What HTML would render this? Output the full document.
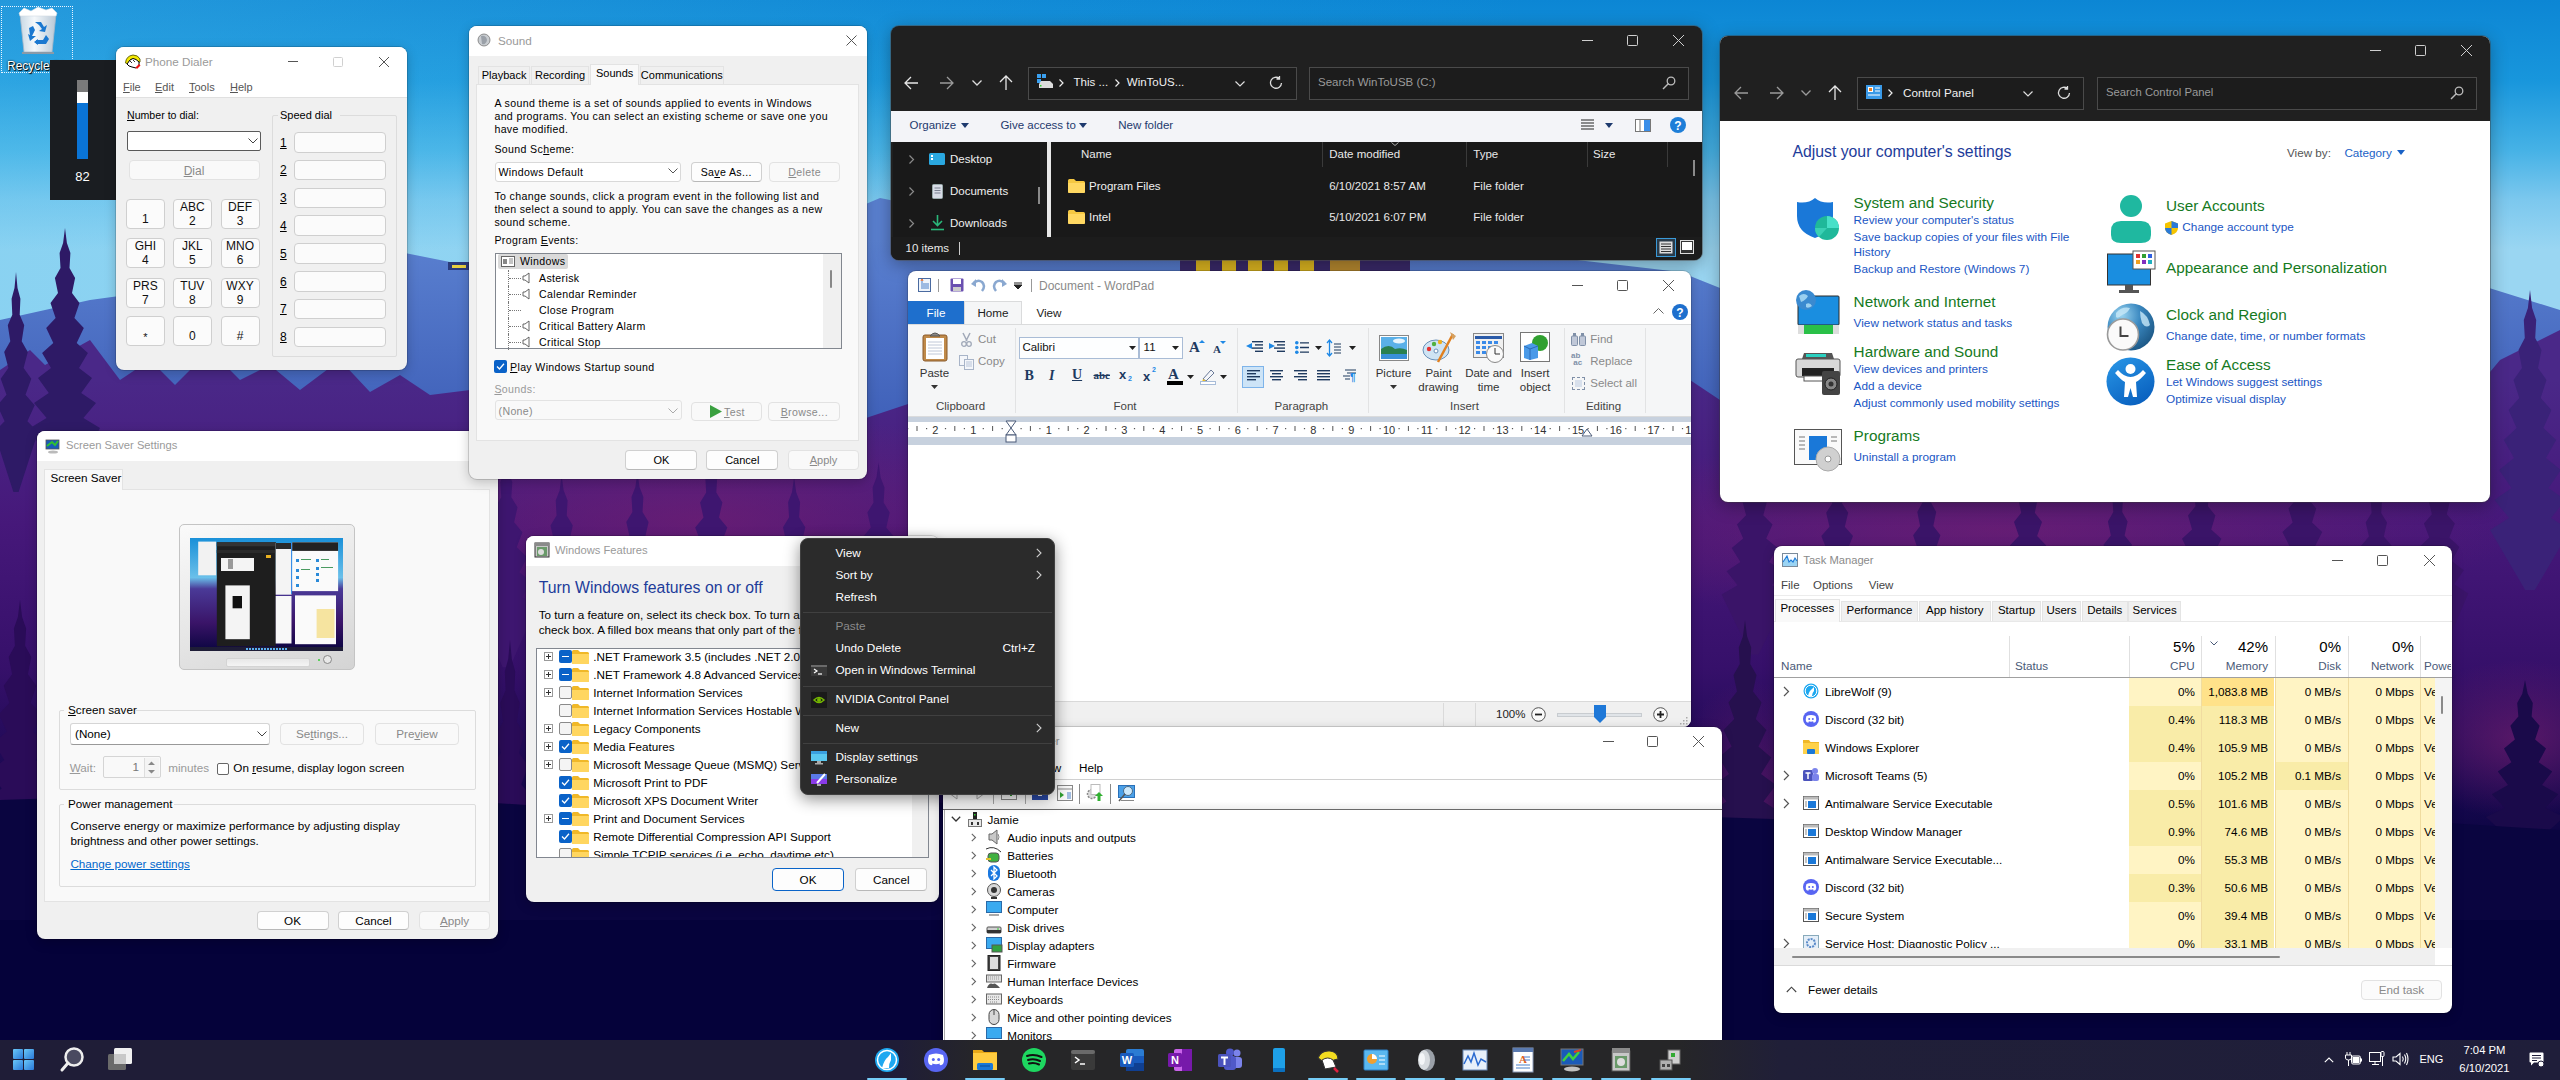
<!DOCTYPE html>
<html><head><meta charset="utf-8">
<style>
*{margin:0;padding:0;box-sizing:border-box}
html,body{width:2560px;height:1080px;overflow:hidden;background:#07043c;font-family:"Liberation Sans",sans-serif;color:#000}
.abs{position:absolute}
.t{position:absolute;white-space:nowrap;line-height:1}
.win{position:absolute;overflow:hidden;border-radius:8px;background:#fff;box-shadow:0 0 0 1px rgba(0,0,0,.18),0 6px 20px rgba(0,0,0,.35)}
.btn{position:absolute;background:#fdfdfd;border:1px solid #d0d0d0;border-bottom-color:#b8b8b8;border-radius:4px}
.btnd{position:absolute;background:#f9f9f9;border:1px solid #e2e2e2;border-radius:4px}
.u{text-decoration:underline;text-underline-offset:1px}
svg{position:absolute;overflow:visible}
</style></head><body>
<svg class="abs" style="left:0;top:0" width="2560" height="1080" viewBox="0 0 2560 1080">
<defs>
<linearGradient id="sky" x1="0" y1="0" x2="0" y2="320" gradientUnits="userSpaceOnUse">
<stop offset="0" stop-color="#0c86d4"/><stop offset="0.25" stop-color="#1896dc"/><stop offset="0.47" stop-color="#46b2e6"/><stop offset="0.625" stop-color="#7cc8ee"/><stop offset="0.78" stop-color="#9ad6f2"/><stop offset="1" stop-color="#9ad6f2"/>
</linearGradient>
<linearGradient id="skyh" x1="0" y1="0" x2="1" y2="0"><stop offset="0" stop-color="#60c8f0" stop-opacity="0.28"/><stop offset="0.35" stop-color="#60c8f0" stop-opacity="0.08"/><stop offset="0.6" stop-color="#60c8f0" stop-opacity="0"/></linearGradient>
<linearGradient id="mtn" x1="0" y1="240" x2="0" y2="460" gradientUnits="userSpaceOnUse">
<stop offset="0" stop-color="#5a80d0"/><stop offset="1" stop-color="#3a5ab4"/>
</linearGradient>
<linearGradient id="purp" x1="0" y1="380" x2="0" y2="860" gradientUnits="userSpaceOnUse">
<stop offset="0" stop-color="#4a2888"/><stop offset="0.3" stop-color="#46187a"/><stop offset="0.6" stop-color="#36106a"/><stop offset="0.85" stop-color="#180850"/><stop offset="1" stop-color="#08043e"/>
</linearGradient>
<radialGradient id="haze" cx="0.5" cy="0.5" r="0.5">
<stop offset="0" stop-color="#7a2070" stop-opacity="0.6"/><stop offset="1" stop-color="#7a2070" stop-opacity="0"/>
</radialGradient>
</defs>
<rect x="0" y="0" width="2560" height="1080" fill="url(#sky)"/>
<rect x="0" y="0" width="2560" height="320" fill="url(#skyh)"/>
<path d="M0 320 L90 300 L200 285 L300 268 L400 252 L450 262 L520 275 L640 290 L760 250 L840 215 L880 198 L940 210 L1000 240 L1200 258 L1400 258 L1560 258 L1680 272 L1720 288 L1780 290 L2000 270 L2200 276 L2400 270 L2470 282 L2560 310 L2560 1080 L0 1080 Z" fill="url(#mtn)"/>
<path d="M0 370 L30 350 L45 365 L90 340 L120 380 L150 360 L175 385 L210 350 L240 380 L270 365 L300 390 L340 360 L370 392 L400 375 L430 395 L470 390 L560 430 L700 450 L860 420 L920 400 L1100 430 L1300 430 L1500 450 L1690 380 L1720 400 L1900 470 L2100 480 L2300 470 L2450 420 L2500 360 L2560 330 L2560 1080 L0 1080 Z" fill="url(#purp)"/>
<ellipse cx="700" cy="520" rx="380" ry="110" fill="url(#haze)"/>
<ellipse cx="2000" cy="530" rx="520" ry="90" fill="url(#haze)"/>
<ellipse cx="2520" cy="740" rx="120" ry="80" fill="url(#haze)"/>
<ellipse cx="1750" cy="800" rx="80" ry="120" fill="url(#haze)"/>
<path d="M65.0 224.0 L65.0 228.0 L66.9 243.0 L70.4 253.0 L69.5 268.0 L75.1 278.0 L72.0 293.0 L79.5 303.0 L74.4 318.0 L83.8 328.0 L76.7 343.0 L87.9 353.0 L79.0 368.0 L92.0 378.0 L81.2 393.0 L96.0 403.0 L83.4 418.0 L100.0 428.0 L69.2 488.0 L60.8 488.0 L30.0 428.0 L46.6 418.0 L34.0 403.0 L48.8 393.0 L38.0 378.0 L51.0 368.0 L42.1 353.0 L53.3 343.0 L46.2 328.0 L55.6 318.0 L50.5 303.0 L58.0 293.0 L54.9 278.0 L60.5 268.0 L59.6 253.0 L63.1 243.0 L65.0 228.0Z" fill="#2e1a66"/><path d="M16.0 268.0 L16.0 272.0 L17.5 288.0 L20.4 298.7 L19.7 314.7 L24.2 325.3 L21.7 341.3 L27.8 352.0 L23.6 368.0 L31.3 378.7 L25.5 394.7 L34.7 405.3 L27.4 421.3 L38.0 432.0 L18.6 492.0 L13.4 492.0 L-6.0 432.0 L4.6 421.3 L-2.7 405.3 L6.5 394.7 L0.7 378.7 L8.4 368.0 L4.2 352.0 L10.3 341.3 L7.8 325.3 L12.3 314.7 L11.6 298.7 L14.5 288.0 L16.0 272.0Z" fill="#2e1a66"/><path d="M2530.0 286.0 L2530.0 290.0 L2532.1 308.0 L2536.2 320.0 L2535.2 338.0 L2541.5 350.0 L2538.0 368.0 L2546.5 380.0 L2540.7 398.0 L2551.4 410.0 L2543.4 428.0 L2556.2 440.0 L2546.0 458.0 L2560.9 470.0 L2548.5 488.0 L2565.5 500.0 L2551.0 518.0 L2570.0 530.0 L2534.8 590.0 L2525.2 590.0 L2490.0 530.0 L2509.0 518.0 L2494.5 500.0 L2511.5 488.0 L2499.1 470.0 L2514.0 458.0 L2503.8 440.0 L2516.6 428.0 L2508.6 410.0 L2519.3 398.0 L2513.5 380.0 L2522.0 368.0 L2518.5 350.0 L2524.8 338.0 L2523.8 320.0 L2527.9 308.0 L2530.0 290.0Z" fill="#3a2278"/><path d="M2525.0 676.0 L2525.0 680.0 L2527.7 693.7 L2532.8 702.9 L2531.6 716.6 L2539.6 725.7 L2535.1 739.4 L2546.0 748.6 L2538.6 762.3 L2552.2 771.4 L2542.0 785.1 L2558.2 794.3 L2545.2 808.0 L2564.2 817.1 L2548.5 830.9 L2570.0 840.0 L2530.4 900.0 L2519.6 900.0 L2480.0 840.0 L2501.5 830.9 L2485.8 817.1 L2504.8 808.0 L2491.8 794.3 L2508.0 785.1 L2497.8 771.4 L2511.4 762.3 L2504.0 748.6 L2514.9 739.4 L2510.4 725.7 L2518.4 716.6 L2517.2 702.9 L2522.3 693.7 L2525.0 680.0Z" fill="#1a0a4a"/><path d="M1754.7 450.5 L1754.7 454.5 L1757.0 468.5 L1761.3 477.9 L1760.3 491.9 L1767.0 501.2 L1763.3 515.2 L1772.5 524.5 L1766.2 538.5 L1777.7 547.9 L1769.1 561.9 L1782.8 571.2 L1771.8 585.2 L1787.9 594.5 L1758.7 654.5 L1750.7 654.5 L1721.6 594.5 L1737.6 585.2 L1726.6 571.2 L1740.4 561.9 L1731.7 547.9 L1743.2 538.5 L1737.0 524.5 L1746.1 515.2 L1742.4 501.2 L1749.2 491.9 L1748.1 477.9 L1752.4 468.5 L1754.7 454.5Z" fill="#3a1468"/><path d="M1837.2 462.1 L1837.2 466.1 L1839.2 480.1 L1843.1 489.4 L1842.1 503.4 L1848.2 512.7 L1844.8 526.7 L1853.0 536.1 L1847.4 550.1 L1857.7 559.4 L1850.0 573.4 L1862.3 582.7 L1852.5 596.7 L1866.7 606.1 L1840.7 666.1 L1833.6 666.1 L1807.6 606.1 L1821.9 596.7 L1812.1 582.7 L1824.4 573.4 L1816.6 559.4 L1826.9 550.1 L1821.3 536.1 L1829.5 526.7 L1826.2 512.7 L1832.2 503.4 L1831.3 489.4 L1835.1 480.1 L1837.2 466.1Z" fill="#3a1468"/><path d="M1926.7 461.2 L1926.7 465.2 L1928.5 479.2 L1931.8 488.6 L1931.0 502.6 L1936.2 511.9 L1933.3 525.9 L1940.4 535.2 L1935.6 549.2 L1944.4 558.6 L1937.8 572.6 L1948.4 581.9 L1939.9 595.9 L1952.2 605.2 L1929.8 665.2 L1923.7 665.2 L1901.3 605.2 L1913.6 595.9 L1905.1 581.9 L1915.7 572.6 L1909.1 558.6 L1917.9 549.2 L1913.1 535.2 L1920.1 525.9 L1917.3 511.9 L1922.5 502.6 L1921.7 488.6 L1925.0 479.2 L1926.7 465.2Z" fill="#3a1468"/><path d="M2028.0 448.1 L2028.0 452.1 L2029.8 466.1 L2033.2 475.4 L2032.4 489.4 L2037.7 498.8 L2034.8 512.8 L2042.0 522.1 L2037.1 536.1 L2046.2 545.4 L2039.3 559.4 L2050.2 568.8 L2041.5 582.8 L2054.1 592.1 L2031.1 652.1 L2024.9 652.1 L2001.9 592.1 L2014.5 582.8 L2005.8 568.8 L2016.7 559.4 L2009.9 545.4 L2018.9 536.1 L2014.0 522.1 L2021.2 512.8 L2018.3 498.8 L2023.6 489.4 L2022.8 475.4 L2026.2 466.1 L2028.0 452.1Z" fill="#3a1468"/><path d="M2117.7 470.8 L2117.7 474.8 L2119.6 488.8 L2123.0 498.1 L2122.2 512.1 L2127.6 521.5 L2124.6 535.5 L2132.0 544.8 L2127.0 558.8 L2136.2 568.1 L2129.2 582.1 L2140.3 591.5 L2131.5 605.5 L2144.3 614.8 L2120.9 674.8 L2114.5 674.8 L2091.2 614.8 L2104.0 605.5 L2095.2 591.5 L2106.2 582.1 L2099.3 568.1 L2108.5 558.8 L2103.5 544.8 L2110.9 535.5 L2107.9 521.5 L2113.3 512.1 L2112.4 498.1 L2115.9 488.8 L2117.7 474.8Z" fill="#3a1468"/><path d="M2201.7 464.8 L2201.7 468.8 L2204.2 482.8 L2209.0 492.2 L2207.9 506.2 L2215.4 515.5 L2211.2 529.5 L2221.4 538.8 L2214.5 552.8 L2227.3 562.2 L2217.7 576.2 L2233.0 585.5 L2220.7 599.5 L2238.5 608.8 L2206.1 668.8 L2197.3 668.8 L2164.9 608.8 L2182.7 599.5 L2170.4 585.5 L2185.7 576.2 L2176.1 562.2 L2188.9 552.8 L2182.0 538.8 L2192.1 529.5 L2188.0 515.5 L2195.5 506.2 L2194.4 492.2 L2199.1 482.8 L2201.7 468.8Z" fill="#3a1468"/><path d="M2302.3 457.9 L2302.3 461.9 L2304.9 475.9 L2309.7 485.2 L2308.5 499.2 L2316.2 508.6 L2312.0 522.6 L2322.2 531.9 L2315.2 545.9 L2328.1 555.2 L2318.4 569.2 L2333.9 578.6 L2321.5 592.6 L2339.5 601.9 L2306.8 661.9 L2297.8 661.9 L2265.1 601.9 L2283.1 592.6 L2270.7 578.6 L2286.2 569.2 L2276.5 555.2 L2289.4 545.9 L2282.4 531.9 L2292.7 522.6 L2288.5 508.6 L2296.1 499.2 L2294.9 485.2 L2299.7 475.9 L2302.3 461.9Z" fill="#3a1468"/><path d="M2376.4 471.8 L2376.4 475.8 L2378.4 489.8 L2382.1 499.1 L2381.2 513.1 L2387.0 522.4 L2383.8 536.4 L2391.7 545.8 L2386.3 559.8 L2396.3 569.1 L2388.8 583.1 L2400.7 592.4 L2391.2 606.4 L2405.0 615.8 L2379.8 675.8 L2373.0 675.8 L2347.8 615.8 L2361.6 606.4 L2352.1 592.4 L2364.0 583.1 L2356.5 569.1 L2366.5 559.8 L2361.1 545.8 L2369.0 536.4 L2365.7 522.4 L2371.6 513.1 L2370.7 499.1 L2374.4 489.8 L2376.4 475.8Z" fill="#3a1468"/><path d="M2439.3 449.5 L2439.3 453.5 L2441.3 467.5 L2445.1 476.9 L2444.2 490.9 L2450.1 500.2 L2446.8 514.2 L2454.8 523.5 L2449.3 537.5 L2459.4 546.9 L2451.8 560.9 L2463.8 570.2 L2454.2 584.2 L2468.2 593.5 L2442.8 653.5 L2435.9 653.5 L2410.5 593.5 L2424.4 584.2 L2414.8 570.2 L2426.8 560.9 L2419.3 546.9 L2429.3 537.5 L2423.9 523.5 L2431.9 514.2 L2428.6 500.2 L2434.5 490.9 L2433.6 476.9 L2437.3 467.5 L2439.3 453.5Z" fill="#3a1468"/><path d="M506.3 453.2 L506.3 457.2 L508.4 472.2 L512.3 482.2 L511.3 497.2 L517.5 507.2 L514.1 522.2 L522.4 532.2 L516.7 547.2 L527.2 557.2 L519.3 572.2 L531.8 582.2 L521.8 597.2 L536.3 607.2 L509.9 667.2 L502.7 667.2 L476.3 607.2 L490.8 597.2 L480.9 582.2 L493.3 572.2 L485.5 557.2 L495.9 547.2 L490.2 532.2 L498.5 522.2 L495.2 507.2 L501.3 497.2 L500.3 482.2 L504.2 472.2 L506.3 457.2Z" fill="#3e1670"/><path d="M561.6 471.6 L561.6 475.6 L563.7 490.6 L567.6 500.6 L566.7 515.6 L572.8 525.6 L569.4 540.6 L577.7 550.6 L572.1 565.6 L582.5 575.6 L574.6 590.6 L587.1 600.6 L577.1 615.6 L591.6 625.6 L565.2 685.6 L558.0 685.6 L531.6 625.6 L546.1 615.6 L536.2 600.6 L548.6 590.6 L540.8 575.6 L551.2 565.6 L545.6 550.6 L553.9 540.6 L550.5 525.6 L556.6 515.6 L555.7 500.6 L559.6 490.6 L561.6 475.6Z" fill="#3e1670"/><path d="M637.4 467.9 L637.4 471.9 L639.5 486.9 L643.4 496.9 L642.5 511.9 L648.6 521.9 L645.2 536.9 L653.5 546.9 L647.9 561.9 L658.3 571.9 L650.4 586.9 L662.9 596.9 L653.0 611.9 L667.4 621.9 L641.0 681.9 L633.8 681.9 L607.4 621.9 L621.9 611.9 L612.0 596.9 L624.5 586.9 L616.6 571.9 L627.0 561.9 L621.4 546.9 L629.7 536.9 L626.3 521.9 L632.4 511.9 L631.5 496.9 L635.4 486.9 L637.4 471.9Z" fill="#3e1670"/><path d="M711.3 448.4 L711.3 452.4 L713.3 467.4 L717.2 477.4 L716.3 492.4 L722.4 502.4 L719.0 517.4 L727.3 527.4 L721.7 542.4 L732.1 552.4 L724.2 567.4 L736.7 577.4 L726.8 592.4 L741.3 602.4 L714.9 662.4 L707.7 662.4 L681.3 602.4 L695.7 592.4 L685.8 577.4 L698.3 567.4 L690.4 552.4 L700.8 542.4 L695.2 527.4 L703.5 517.4 L700.1 502.4 L706.2 492.4 L705.3 477.4 L709.2 467.4 L711.3 452.4Z" fill="#3e1670"/><path d="M794.1 473.2 L794.1 477.2 L796.2 492.2 L800.1 502.2 L799.1 517.2 L805.3 527.2 L801.9 542.2 L810.2 552.2 L804.5 567.2 L814.9 577.2 L807.1 592.2 L819.6 602.2 L809.6 617.2 L824.1 627.2 L797.7 687.2 L790.5 687.2 L764.1 627.2 L778.6 617.2 L768.7 602.2 L781.1 592.2 L773.3 577.2 L783.7 567.2 L778.0 552.2 L786.3 542.2 L783.0 527.2 L789.1 517.2 L788.1 502.2 L792.0 492.2 L794.1 477.2Z" fill="#3e1670"/><path d="M878.6 458.6 L878.6 462.6 L880.6 477.6 L884.5 487.6 L883.6 502.6 L889.7 512.6 L886.3 527.6 L894.6 537.6 L889.0 552.6 L899.4 562.6 L891.5 577.6 L904.0 587.6 L894.1 602.6 L908.6 612.6 L882.2 672.6 L875.0 672.6 L848.6 612.6 L863.0 602.6 L853.1 587.6 L865.6 577.6 L857.7 562.6 L868.1 552.6 L862.5 537.6 L870.8 527.6 L867.4 512.6 L873.5 502.6 L872.6 487.6 L876.5 477.6 L878.6 462.6Z" fill="#3e1670"/><path d="M1745.0 616.0 L1745.0 620.0 L1747.1 636.5 L1751.2 647.5 L1750.2 664.0 L1756.5 675.0 L1753.0 691.5 L1761.5 702.5 L1755.7 719.0 L1766.4 730.0 L1758.4 746.5 L1771.2 757.5 L1761.0 774.0 L1775.9 785.0 L1763.5 801.5 L1780.5 812.5 L1766.0 829.0 L1785.0 840.0 L1749.8 900.0 L1740.2 900.0 L1705.0 840.0 L1724.0 829.0 L1709.5 812.5 L1726.5 801.5 L1714.1 785.0 L1729.0 774.0 L1718.8 757.5 L1731.6 746.5 L1723.6 730.0 L1734.3 719.0 L1728.5 702.5 L1737.0 691.5 L1733.5 675.0 L1739.8 664.0 L1738.8 647.5 L1742.9 636.5 L1745.0 620.0Z" fill="#26104e"/><path d="M20.0 596.0 L20.0 600.0 L22.1 617.1 L26.1 628.6 L25.1 645.7 L31.3 657.1 L27.9 674.3 L36.3 685.7 L30.6 702.9 L41.2 714.3 L33.2 731.4 L45.9 742.9 L35.7 760.0 L50.5 771.4 L38.3 788.6 L55.0 800.0 L24.2 860.0 L15.8 860.0 L-15.0 800.0 L1.7 788.6 L-10.5 771.4 L4.3 760.0 L-5.9 742.9 L6.8 731.4 L-1.2 714.3 L9.4 702.9 L3.7 685.7 L12.1 674.3 L8.7 657.1 L14.9 645.7 L13.9 628.6 L17.9 617.1 L20.0 600.0Z" fill="#2a0c58"/><path d="M510.0 636.0 L510.0 640.0 L511.8 658.9 L515.2 671.4 L514.4 690.3 L519.7 702.9 L516.8 721.7 L524.0 734.3 L519.1 753.1 L528.1 765.7 L521.3 784.6 L532.2 797.1 L523.5 816.0 L536.1 828.6 L525.6 847.4 L540.0 860.0 L513.6 920.0 L506.4 920.0 L480.0 860.0 L494.4 847.4 L483.9 828.6 L496.5 816.0 L487.8 797.1 L498.7 784.6 L491.9 765.7 L500.9 753.1 L496.0 734.3 L503.2 721.7 L500.3 702.9 L505.6 690.3 L504.8 671.4 L508.2 658.9 L510.0 640.0Z" fill="#2a0c58"/>
<rect x="448" y="262" width="22" height="8" fill="#2a3a7a"/><rect x="452" y="265" width="14" height="3" fill="#e8d040"/>
<path d="M0 800 L300 790 L600 810 L900 800 L1200 820 L1500 810 L1800 820 L2100 830 L2400 820 L2560 830 L2560 1080 L0 1080 Z" fill="#0a0540"/>
<rect x="0" y="920" width="2560" height="160" fill="#05023a"/>
<rect x="1180" y="256" width="230" height="16" fill="#3a2a6a"/>
<rect x="1196" y="260" width="14" height="12" fill="#e0b820"/><rect x="1222" y="260" width="14" height="12" fill="#e0b820"/><rect x="1248" y="260" width="14" height="12" fill="#e0b820"/><rect x="1274" y="260" width="14" height="12" fill="#e0b820"/><rect x="1300" y="260" width="14" height="12" fill="#e0b820"/><rect x="1330" y="260" width="30" height="12" fill="#b88a30"/>
</svg>
<div class="abs" style="left:1px;top:6px;width:72px;height:67px;border:1px dotted #e8f4ff"></div>
<svg style="left:18px;top:6px;" width="40" height="48" viewBox="0 0 40 48">
<defs><linearGradient id="rbg" x1="0" y1="0" x2="1" y2="0"><stop offset="0" stop-color="#c8d8e4"/><stop offset="0.4" stop-color="#f4f8fb"/><stop offset="1" stop-color="#b8c8d6"/></linearGradient></defs>
<path d="M2 8 L38 8 L34 46 L6 46 Z" fill="url(#rbg)" stroke="#a8b8c8" stroke-width="0.8"/>
<path d="M1 7 L6 2 L13 5 L20 1 L28 4 L34 2 L39 7 L38 10 L2 10Z" fill="#ffffff" stroke="#d0dae2" stroke-width="0.6"/>
<path d="M17 16 L23 16 L26 21 L29 19 L27 26 L21 25 L24 23 L21 19 Z" fill="#1a78d0"/>
<path d="M11 22 L15 20 L17 24 L14 30 L18 30 L12 35 L10 28 L12 29 Z" fill="#1a78d0"/>
<path d="M18 34 L25 34 L28 29 L31 33 L28 38 L18 38 Z M16 36 L20 33 L20 39Z" fill="#1a78d0"/>
<rect x="4" y="46" width="32" height="2" fill="#8a9aa8"/>
</svg>
<div class="t" style="left:7.0px;top:59.5px;font-size:12px;color:#fff;text-shadow:0 0 2px #000,1px 1px 1px #000">Recycle Bin</div>
<div class="abs" style="left:50.0px;top:60.0px;width:70.0px;height:140.0px;background:#1a1d21"></div>
<div class="abs" style="left:77.0px;top:80.0px;width:11.0px;height:12.0px;background:#7a7a7a"></div>
<div class="abs" style="left:77.0px;top:92.0px;width:11.0px;height:11.0px;background:#ffffff"></div>
<div class="abs" style="left:77.0px;top:103.0px;width:11.0px;height:56.0px;background:#0a74d6"></div>
<div class="t" style="left:-217.5px;width:600px;text-align:center;top:170.0px;font-size:13px;color:#fff;">82</div>
<div class="abs" style="left:116.0px;top:47.0px;width:291.0px;height:323.0px;background:#f0f0f0;border-radius:8px;box-shadow:0 0 0 1px rgba(0,0,0,.14),0 3px 12px rgba(0,0,0,.22);"></div>
<div class="abs" style="left:116.0px;top:47.0px;width:291.0px;height:50.0px;background:#fff;border-radius:8px 8px 0 0"></div>
<div class="abs" style="left:116.0px;top:97.0px;width:291.0px;height:1.0px;background:#e0e0e0"></div>
<svg style="left:124px;top:53px;" width="17" height="17" viewBox="0 0 17 17"><path d="M1.5 10 Q2 3 9 2 Q14 2 16 6 L16 9 L14 9.5 Q12 6 8 6 Q5 7 4 11 Z" fill="#f4e800" stroke="#5a5a00" stroke-width="0.9"/><path d="M3 11 L6 7 L9 5.5 L12 6.5 L15 9 L15 12 L12 15 L8 14 L5 13 Z" fill="#fff" stroke="#000" stroke-width="1"/><path d="M6 8 L8 10 M9 7 L11 9" stroke="#000" stroke-width="0.8"/><path d="M11.5 14.5 L15 11 L16.5 12.5 L13 16 Z" fill="#ee1010"/></svg>
<div class="t" style="left:145.0px;top:55.6px;font-size:11.7px;color:#9a9a9a;">Phone Dialer</div>
<svg style="left:288.0px;top:61.0px" width="10" height="1"><rect width="10" height="1" fill="#555"/></svg>
<svg style="left:333.0px;top:56.5px" width="10" height="10"><rect x="0.5" y="0.5" width="9" height="9" rx="1" fill="none" stroke="#d0d0d0" stroke-width="1"/></svg>
<svg style="left:379.0px;top:56.5px" width="10" height="10"><path d="M0 0L10 10M10 0L0 10" stroke="#555" stroke-width="1"/></svg>
<div class="t" style="left:123.0px;top:81.5px;font-size:11px;color:#555;"><u>F</u>ile</div>
<div class="t" style="left:155.0px;top:81.5px;font-size:11px;color:#555;"><u>E</u>dit</div>
<div class="t" style="left:189.0px;top:81.5px;font-size:11px;color:#555;"><u>T</u>ools</div>
<div class="t" style="left:230.0px;top:81.5px;font-size:11px;color:#555;"><u>H</u>elp</div>
<div class="t" style="left:127.0px;top:109.7px;font-size:10.6px;color:#000;"><u>N</u>umber to dial:</div>
<div class="abs" style="left:127.0px;top:131.0px;width:134.0px;height:20.0px;background:#fff;border:1px solid #5a5a5a;border-radius:2px"></div>
<svg style="left:248px;top:138px;" width="10" height="6" viewBox="0 0 10 6"><path d="M0.5 0.5 L5 5 L9.5 0.5" fill="none" stroke="#444" stroke-width="1"/></svg>
<div class="btnd" style="left:128.5px;top:160px;width:131.5px;height:20px"></div>
<div class="t" style="left:-106.0px;width:600px;text-align:center;top:164.5px;font-size:12px;color:#8a8a8a;"><u>D</u>ial</div>
<div class="btn" style="left:126.4px;top:199.3px;width:38.5px;height:30px;background:#fbfbfb;border-color:#cfcfcf"></div>
<div class="t" style="left:-154.6px;width:600px;text-align:center;top:213.3px;font-size:12px;color:#111;">1</div>
<div class="btn" style="left:173.3px;top:199.3px;width:38.5px;height:30px;background:#fbfbfb;border-color:#cfcfcf"></div>
<div class="t" style="left:-107.7px;width:600px;text-align:center;top:201.3px;font-size:12px;color:#111;">ABC</div>
<div class="t" style="left:-107.7px;width:600px;text-align:center;top:215.3px;font-size:12px;color:#111;">2</div>
<div class="btn" style="left:221px;top:199.3px;width:38.5px;height:30px;background:#fbfbfb;border-color:#cfcfcf"></div>
<div class="t" style="left:-60.0px;width:600px;text-align:center;top:201.3px;font-size:12px;color:#111;">DEF</div>
<div class="t" style="left:-60.0px;width:600px;text-align:center;top:215.3px;font-size:12px;color:#111;">3</div>
<div class="btn" style="left:126.4px;top:238.4px;width:38.5px;height:30px;background:#fbfbfb;border-color:#cfcfcf"></div>
<div class="t" style="left:-154.6px;width:600px;text-align:center;top:240.4px;font-size:12px;color:#111;">GHI</div>
<div class="t" style="left:-154.6px;width:600px;text-align:center;top:254.4px;font-size:12px;color:#111;">4</div>
<div class="btn" style="left:173.3px;top:238.4px;width:38.5px;height:30px;background:#fbfbfb;border-color:#cfcfcf"></div>
<div class="t" style="left:-107.7px;width:600px;text-align:center;top:240.4px;font-size:12px;color:#111;">JKL</div>
<div class="t" style="left:-107.7px;width:600px;text-align:center;top:254.4px;font-size:12px;color:#111;">5</div>
<div class="btn" style="left:221px;top:238.4px;width:38.5px;height:30px;background:#fbfbfb;border-color:#cfcfcf"></div>
<div class="t" style="left:-60.0px;width:600px;text-align:center;top:240.4px;font-size:12px;color:#111;">MNO</div>
<div class="t" style="left:-60.0px;width:600px;text-align:center;top:254.4px;font-size:12px;color:#111;">6</div>
<div class="btn" style="left:126.4px;top:277.5px;width:38.5px;height:30px;background:#fbfbfb;border-color:#cfcfcf"></div>
<div class="t" style="left:-154.6px;width:600px;text-align:center;top:279.5px;font-size:12px;color:#111;">PRS</div>
<div class="t" style="left:-154.6px;width:600px;text-align:center;top:293.5px;font-size:12px;color:#111;">7</div>
<div class="btn" style="left:173.3px;top:277.5px;width:38.5px;height:30px;background:#fbfbfb;border-color:#cfcfcf"></div>
<div class="t" style="left:-107.7px;width:600px;text-align:center;top:279.5px;font-size:12px;color:#111;">TUV</div>
<div class="t" style="left:-107.7px;width:600px;text-align:center;top:293.5px;font-size:12px;color:#111;">8</div>
<div class="btn" style="left:221px;top:277.5px;width:38.5px;height:30px;background:#fbfbfb;border-color:#cfcfcf"></div>
<div class="t" style="left:-60.0px;width:600px;text-align:center;top:279.5px;font-size:12px;color:#111;">WXY</div>
<div class="t" style="left:-60.0px;width:600px;text-align:center;top:293.5px;font-size:12px;color:#111;">9</div>
<div class="btn" style="left:126.4px;top:316.3px;width:38.5px;height:30px;background:#fbfbfb;border-color:#cfcfcf"></div>
<div class="t" style="left:-154.6px;width:600px;text-align:center;top:331.8px;font-size:11px;color:#111;">*</div>
<div class="btn" style="left:173.3px;top:316.3px;width:38.5px;height:30px;background:#fbfbfb;border-color:#cfcfcf"></div>
<div class="t" style="left:-107.7px;width:600px;text-align:center;top:330.3px;font-size:12px;color:#111;">0</div>
<div class="btn" style="left:221px;top:316.3px;width:38.5px;height:30px;background:#fbfbfb;border-color:#cfcfcf"></div>
<div class="t" style="left:-60.0px;width:600px;text-align:center;top:330.3px;font-size:12px;color:#111;">#</div>
<div class="abs" style="left:271.5px;top:115.0px;width:125.0px;height:241.5px;border:1px solid #dcdcdc;border-radius:2px"></div>
<div class="abs" style="left:278.0px;top:108.0px;width:62.0px;height:14.0px;background:#f0f0f0"></div>
<div class="t" style="left:280.0px;top:109.5px;font-size:11px;color:#000;">Speed dial</div>
<div class="abs" style="left:293.5px;top:132.0px;width:92px;height:20.5px;background:#fbfbfb;border:1px solid #cfcfcf;border-radius:4px"></div>
<div class="t" style="left:280.0px;top:136.5px;font-size:12px;color:#000;"><u>1</u></div>
<div class="abs" style="left:293.5px;top:159.8px;width:92px;height:20.5px;background:#fbfbfb;border:1px solid #cfcfcf;border-radius:4px"></div>
<div class="t" style="left:280.0px;top:164.3px;font-size:12px;color:#000;"><u>2</u></div>
<div class="abs" style="left:293.5px;top:187.6px;width:92px;height:20.5px;background:#fbfbfb;border:1px solid #cfcfcf;border-radius:4px"></div>
<div class="t" style="left:280.0px;top:192.1px;font-size:12px;color:#000;"><u>3</u></div>
<div class="abs" style="left:293.5px;top:215.4px;width:92px;height:20.5px;background:#fbfbfb;border:1px solid #cfcfcf;border-radius:4px"></div>
<div class="t" style="left:280.0px;top:219.9px;font-size:12px;color:#000;"><u>4</u></div>
<div class="abs" style="left:293.5px;top:243.2px;width:92px;height:20.5px;background:#fbfbfb;border:1px solid #cfcfcf;border-radius:4px"></div>
<div class="t" style="left:280.0px;top:247.7px;font-size:12px;color:#000;"><u>5</u></div>
<div class="abs" style="left:293.5px;top:271.0px;width:92px;height:20.5px;background:#fbfbfb;border:1px solid #cfcfcf;border-radius:4px"></div>
<div class="t" style="left:280.0px;top:275.5px;font-size:12px;color:#000;"><u>6</u></div>
<div class="abs" style="left:293.5px;top:298.8px;width:92px;height:20.5px;background:#fbfbfb;border:1px solid #cfcfcf;border-radius:4px"></div>
<div class="t" style="left:280.0px;top:303.3px;font-size:12px;color:#000;"><u>7</u></div>
<div class="abs" style="left:293.5px;top:326.6px;width:92px;height:20.5px;background:#fbfbfb;border:1px solid #cfcfcf;border-radius:4px"></div>
<div class="t" style="left:280.0px;top:331.1px;font-size:12px;color:#000;"><u>8</u></div>
<div class="abs" style="left:37.0px;top:431.0px;width:461.0px;height:508.0px;background:#f0f0f0;border-radius:8px;box-shadow:0 0 0 1px rgba(0,0,0,.14),0 3px 12px rgba(0,0,0,.22);"></div>
<div class="abs" style="left:37.0px;top:431.0px;width:461.0px;height:30.0px;background:#fff;border-radius:8px 8px 0 0"></div>
<svg style="left:45px;top:438px;" width="16" height="16" viewBox="0 0 16 16"><rect x="1" y="2" width="13" height="9" fill="#1a5ab8" stroke="#555" stroke-width="0.8"/><path d="M2 8 L7 4 L10 7 L13 3" stroke="#30c030" stroke-width="2" fill="none"/><ellipse cx="8" cy="14" rx="5" ry="1.6" fill="#bbb"/></svg>
<div class="t" style="left:66.0px;top:440.4px;font-size:11.2px;color:#9a9a9a;">Screen Saver Settings</div>
<div class="abs" style="left:43.7px;top:488.5px;width:446.0px;height:413.0px;background:#f9f9f9;border:1px solid #e3e3e3"></div>
<div class="abs" style="left:44.0px;top:469.0px;width:78.5px;height:21.0px;background:#f9f9f9;border:1px solid #e3e3e3;border-bottom:none"></div>
<div class="t" style="left:50.5px;top:472.1px;font-size:11.7px;color:#000;">Screen Saver</div>
<div class="abs" style="left:179.3px;top:524.3px;width:176.2px;height:145.7px;background:linear-gradient(160deg,#fafafa,#e4e4e4 60%,#d4d4d4);border:1px solid #c4c4c4;border-radius:5px"></div>
<svg style="left:189.8px;top:538px" width="153" height="113" viewBox="0 0 153 113">
<defs><linearGradient id="pvsky" x1="0" y1="0" x2="0" y2="1"><stop offset="0" stop-color="#1a90d8"/><stop offset="0.35" stop-color="#6ac0ea"/><stop offset="0.45" stop-color="#4a3a98"/><stop offset="0.75" stop-color="#3a1468"/><stop offset="1" stop-color="#0a0540"/></linearGradient></defs>
<rect width="153" height="113" fill="url(#pvsky)"/>
<rect x="8.2" y="3.6" width="18" height="33.7" fill="#f2f2f2"/>
<rect x="26.8" y="4.3" width="59" height="104" fill="#1e1e1e"/>
<rect x="26.8" y="4.3" width="59" height="4" fill="#333"/>
<rect x="26.8" y="12" width="59" height="3" fill="#2a2a2a"/>
<rect x="76" y="17" width="5" height="3" fill="#e8b020"/>
<rect x="31" y="20" width="33" height="13" fill="#f4f4f4"/>
<rect x="38" y="21" width="5" height="10" fill="#999"/>
<rect x="35.4" y="47.4" width="24.4" height="53.8" fill="#f4f4f4"/>
<rect x="42.6" y="58" width="9.4" height="12.3" fill="#111"/>
<rect x="85.7" y="5" width="15.8" height="51.7" fill="#f4f4f4"/>
<rect x="85.7" y="5" width="15.8" height="6" fill="#2a2a2a"/>
<rect x="101" y="5" width="1" height="51" fill="#3a8ee8"/>
<rect x="102.2" y="4.3" width="45.9" height="48.8" fill="#fafafa"/>
<rect x="102.2" y="4.3" width="45.9" height="8.6" fill="#222"/>
<g fill="#2a8ad8"><rect x="106" y="21" width="3" height="3"/><rect x="106" y="31" width="3" height="3"/><rect x="106" y="38" width="3" height="3"/><rect x="106" y="46" width="3" height="3"/><rect x="126" y="21" width="3" height="3"/><rect x="126" y="29" width="3" height="3"/><rect x="126" y="35" width="3" height="3"/><rect x="126" y="41" width="3" height="3"/></g>
<g fill="#4a9a60"><rect x="111" y="21" width="10" height="1"/><rect x="131" y="21" width="8" height="1"/><rect x="111" y="31" width="9" height="1"/><rect x="131" y="29" width="12" height="1"/></g>
<rect x="85.7" y="58" width="15.8" height="47.5" fill="#f8f8f8"/>
<rect x="105" y="57.4" width="41" height="48.8" fill="#fafafa"/>
<rect x="126.6" y="71" width="17.9" height="29" fill="#f6e4a0"/>
<rect x="0" y="109" width="153" height="4" fill="#1e1d36"/>
<g fill="#5ab0f0"><rect x="56" y="110" width="2" height="2"/><rect x="59" y="110" width="2" height="2"/><rect x="62" y="110" width="2" height="2"/><rect x="65" y="110" width="2" height="2"/><rect x="68" y="110" width="2" height="2"/><rect x="71" y="110" width="2" height="2"/><rect x="74" y="110" width="2" height="2"/><rect x="77" y="110" width="2" height="2"/><rect x="80" y="110" width="2" height="2"/><rect x="83" y="110" width="2" height="2"/><rect x="86" y="110" width="2" height="2"/><rect x="89" y="110" width="2" height="2"/><rect x="92" y="110" width="2" height="2"/><rect x="95" y="110" width="2" height="2"/></g>
</svg>
<div class="abs" style="left:225.5px;top:658.0px;width:84.0px;height:9.0px;background:linear-gradient(#e8e8e8,#f4f4f4);border:1px solid #d4d4d4;border-radius:2px"></div>
<div class="abs" style="left:323px;top:655px;width:9px;height:9px;border:1.2px solid #888;border-radius:50%;background:#e8e8e8"></div>
<div class="abs" style="left:317.5px;top:658.5px;width:2.5px;height:2.5px;background:#3c3;border-radius:50%"></div>
<div class="abs" style="left:59.3px;top:710.0px;width:416.7px;height:80.0px;border:1px solid #dcdcdc;border-radius:2px"></div>
<div class="abs" style="left:64.0px;top:703.0px;width:72.0px;height:14.0px;background:#f9f9f9"></div>
<div class="t" style="left:68.0px;top:704.1px;font-size:11.7px;color:#000;"><u>S</u>creen saver</div>
<div class="abs" style="left:70.4px;top:723.0px;width:200.0px;height:22.2px;background:#fff;border:1px solid #d5d5d5;border-bottom-color:#999;border-radius:3px"></div>
<div class="t" style="left:75.0px;top:728.1px;font-size:11.7px;color:#000;">(None)</div>
<svg style="left:257px;top:731px;" width="10" height="6" viewBox="0 0 10 6"><path d="M0.5 0.5 L5 5 L9.5 0.5" fill="none" stroke="#444"/></svg>
<div class="btnd" style="left:279.6px;top:722.8px;width:84.6px;height:22.5px"></div>
<div class="t" style="left:22.0px;width:600px;text-align:center;top:728.1px;font-size:11.7px;color:#8a8a8a;">Se<u>t</u>tings...</div>
<div class="btnd" style="left:374.6px;top:722.8px;width:84.8px;height:22.5px"></div>
<div class="t" style="left:117.0px;width:600px;text-align:center;top:728.1px;font-size:11.7px;color:#8a8a8a;">Pre<u>v</u>iew</div>
<div class="t" style="left:69.7px;top:761.8px;font-size:11.7px;color:#9a9a9a;"><u>W</u>ait:</div>
<div class="abs" style="left:103.0px;top:756.3px;width:57.8px;height:22.2px;background:#f9f9f9;border:1px solid #d5d5d5;border-radius:2px"></div>
<div class="t" style="left:-461.0px;width:600px;text-align:right;top:761.1px;font-size:11.7px;color:#777;">1</div>
<div class="abs" style="left:144.0px;top:758.0px;width:15.0px;height:19.0px;background:#f4f4f4;border-left:1px solid #ddd"></div>
<svg style="left:147px;top:760px;" width="9" height="15" viewBox="0 0 9 15"><path d="M1 5 L4.5 1.5 L8 5Z M1 10 L4.5 13.5 L8 10Z" fill="#888"/></svg>
<div class="t" style="left:168.2px;top:761.8px;font-size:11.7px;color:#9a9a9a;">minutes</div>
<div class="abs" style="left:217.0px;top:762.6px;width:12.4px;height:12.0px;background:#fff;border:1px solid #666;border-radius:2px"></div>
<div class="t" style="left:233.3px;top:762.1px;font-size:11.7px;color:#000;">On <u>r</u>esume, display logon screen</div>
<div class="abs" style="left:59.1px;top:803.6px;width:416.6px;height:83.0px;border:1px solid #dcdcdc;border-radius:2px"></div>
<div class="abs" style="left:64.0px;top:796.0px;width:110.0px;height:14.0px;background:#f9f9f9"></div>
<div class="t" style="left:68.0px;top:797.9px;font-size:11.7px;color:#000;">Power management</div>
<div class="t" style="left:70.4px;top:819.8px;font-size:11.7px;color:#000;">Conserve energy or maximize performance by adjusting display</div>
<div class="t" style="left:70.4px;top:834.9px;font-size:11.7px;color:#000;">brightness and other power settings.</div>
<div class="t" style="left:70.4px;top:858.1px;font-size:11.7px;color:#0066cc;text-decoration:underline">Change power settings</div>
<div class="btn" style="left:256.5px;top:910.7px;width:72px;height:19.7px"></div>
<div class="t" style="left:-7.5px;width:600px;text-align:center;top:914.6px;font-size:11.7px;color:#000;">OK</div>
<div class="btn" style="left:337.5px;top:910.7px;width:71.8px;height:19.7px"></div>
<div class="t" style="left:73.4px;width:600px;text-align:center;top:914.6px;font-size:11.7px;color:#000;">Cancel</div>
<div class="btnd" style="left:418.7px;top:910.7px;width:71.8px;height:19.7px"></div>
<div class="t" style="left:154.6px;width:600px;text-align:center;top:914.6px;font-size:11.7px;color:#8a8a8a;"><u>A</u>pply</div>
<div class="abs" style="left:469.0px;top:26.0px;width:398.0px;height:453.0px;background:#f0f0f0;border-radius:8px;box-shadow:0 0 0 1px rgba(0,0,0,.14),0 3px 12px rgba(0,0,0,.22);"></div>
<div class="abs" style="left:469.0px;top:26.0px;width:398.0px;height:30.0px;background:#fff;border-radius:8px 8px 0 0"></div>
<svg style="left:477px;top:33px;" width="14" height="14" viewBox="0 0 14 14"><circle cx="7" cy="7" r="6" fill="#c8ccd0" stroke="#777" stroke-width="0.8"/><path d="M4 3 Q9 2 10 7 Q9 12 5 11" fill="#9aa0a8"/></svg>
<div class="t" style="left:498.0px;top:34.6px;font-size:11.7px;color:#9a9a9a;">Sound</div>
<svg style="left:846px;top:35px" width="11" height="11"><path d="M0.5 0.5L10.5 10.5M10.5 0.5L0.5 10.5" stroke="#555" stroke-width="1"/></svg>
<div class="abs" style="left:475.6px;top:83.7px;width:383.0px;height:357.5px;background:#f9f9f9;border:1px solid #e3e3e3"></div>
<div class="abs" style="left:477.8px;top:65.6px;width:52.7px;height:18.5px;background:#f0f0f0;border:1px solid #e3e3e3;border-bottom:none"></div>
<div class="t" style="left:204.1px;width:600px;text-align:center;top:69.5px;font-size:11px;color:#000;">Playback</div>
<div class="abs" style="left:530.8px;top:65.6px;width:58.7px;height:18.5px;background:#f0f0f0;border:1px solid #e3e3e3;border-bottom:none"></div>
<div class="t" style="left:260.1px;width:600px;text-align:center;top:69.5px;font-size:11px;color:#000;">Recording</div>
<div class="abs" style="left:639.5px;top:65.6px;width:84.5px;height:18.5px;background:#f0f0f0;border:1px solid #e3e3e3;border-bottom:none"></div>
<div class="t" style="left:381.8px;width:600px;text-align:center;top:69.5px;font-size:11px;color:#000;">Communications</div>
<div class="abs" style="left:589.8px;top:63.7px;width:49.7px;height:21.0px;background:#f9f9f9;border:1px solid #e3e3e3;border-bottom:none"></div>
<div class="t" style="left:314.6px;width:600px;text-align:center;top:67.5px;font-size:11px;color:#000;">Sounds</div>
<div class="t" style="left:494.4px;top:97.7px;font-size:10.6px;color:#000;letter-spacing:0.35px">A sound theme is a set of sounds applied to events in Windows</div>
<div class="t" style="left:494.4px;top:110.7px;font-size:10.6px;color:#000;letter-spacing:0.35px">and programs.  You can select an existing scheme or save one you</div>
<div class="t" style="left:494.4px;top:123.7px;font-size:10.6px;color:#000;letter-spacing:0.35px">have modified.</div>
<div class="t" style="left:494.4px;top:143.7px;font-size:10.6px;color:#000;letter-spacing:0.35px">Sound Sc<u>h</u>eme:</div>
<div class="abs" style="left:494.8px;top:161.5px;width:186.2px;height:20.5px;background:#fff;border:1px solid #d9d9d9;border-radius:3px"></div>
<div class="t" style="left:498.5px;top:166.7px;font-size:10.6px;color:#000;letter-spacing:0.35px">Windows Default</div>
<svg style="left:668px;top:168px;" width="10" height="6" viewBox="0 0 10 6"><path d="M0.5 0.5 L5 5 L9.5 0.5" fill="none" stroke="#555"/></svg>
<div class="btn" style="left:690.7px;top:161.5px;width:71.3px;height:20.5px"></div>
<div class="t" style="left:426.3px;width:600px;text-align:center;top:166.7px;font-size:10.6px;color:#000;letter-spacing:0.35px">Sa<u>v</u>e As...</div>
<div class="btnd" style="left:769px;top:161.5px;width:71.4px;height:20.5px"></div>
<div class="t" style="left:504.7px;width:600px;text-align:center;top:166.7px;font-size:10.6px;color:#8a8a8a;letter-spacing:0.35px"><u>D</u>elete</div>
<div class="t" style="left:494.4px;top:191.0px;font-size:10.6px;color:#000;letter-spacing:0.35px">To change sounds, click a program event in the following list and</div>
<div class="t" style="left:494.4px;top:204.0px;font-size:10.6px;color:#000;letter-spacing:0.35px">then select a sound to apply.  You can save the changes as a new</div>
<div class="t" style="left:494.4px;top:217.1px;font-size:10.6px;color:#000;letter-spacing:0.35px">sound scheme.</div>
<div class="t" style="left:494.4px;top:234.5px;font-size:10.6px;color:#000;letter-spacing:0.35px">Program <u>E</u>vents:</div>
<div class="abs" style="left:494.8px;top:252.8px;width:347.0px;height:96.7px;background:#fff;border:1px solid #82878f"></div>
<div class="abs" style="left:823.4px;top:253.8px;width:17.5px;height:94.7px;background:#f0f0f0"></div>
<div class="abs" style="left:829.5px;top:270.0px;width:2.0px;height:18.0px;background:#888;border-radius:1px"></div>
<div class="abs" style="left:498.0px;top:254.0px;width:70.0px;height:15.0px;background:#dadada;border-radius:2px"></div>
<svg style="left:501px;top:256px;" width="14" height="11" viewBox="0 0 14 11"><rect x="0.5" y="0.5" width="13" height="10" fill="#fff" stroke="#666"/><rect x="2" y="3" width="4" height="5" fill="#888"/><path d="M8 3h4M8 5h4M8 7h4" stroke="#888"/></svg>
<div class="t" style="left:520.0px;top:256.3px;font-size:10.6px;color:#000;letter-spacing:0.35px">Windows</div>
<div class="abs" style="left:508px;top:270.0px;width:1px;height:16px;border-left:1px dotted #777"></div>
<div class="abs" style="left:509px;top:278.0px;width:12px;height:1px;border-top:1px dotted #777"></div>
<svg style="left:522px;top:272px;" width="9" height="12" viewBox="0 0 9 12"><path d="M1 4h2l4-3v10l-4-3h-2z" fill="#fff" stroke="#555" stroke-width="0.9"/></svg>
<div class="t" style="left:539.0px;top:272.7px;font-size:10.6px;color:#000;letter-spacing:0.35px">Asterisk</div>
<div class="abs" style="left:508px;top:286.1px;width:1px;height:16px;border-left:1px dotted #777"></div>
<div class="abs" style="left:509px;top:294.1px;width:12px;height:1px;border-top:1px dotted #777"></div>
<svg style="left:522px;top:288px;" width="9" height="12" viewBox="0 0 9 12"><path d="M1 4h2l4-3v10l-4-3h-2z" fill="#fff" stroke="#555" stroke-width="0.9"/></svg>
<div class="t" style="left:539.0px;top:288.8px;font-size:10.6px;color:#000;letter-spacing:0.35px">Calendar Reminder</div>
<div class="abs" style="left:508px;top:302.1px;width:1px;height:16px;border-left:1px dotted #777"></div>
<div class="abs" style="left:509px;top:310.1px;width:12px;height:1px;border-top:1px dotted #777"></div>
<div class="t" style="left:539.0px;top:304.8px;font-size:10.6px;color:#000;letter-spacing:0.35px">Close Program</div>
<div class="abs" style="left:508px;top:318.1px;width:1px;height:16px;border-left:1px dotted #777"></div>
<div class="abs" style="left:509px;top:326.1px;width:12px;height:1px;border-top:1px dotted #777"></div>
<svg style="left:522px;top:320px;" width="9" height="12" viewBox="0 0 9 12"><path d="M1 4h2l4-3v10l-4-3h-2z" fill="#fff" stroke="#555" stroke-width="0.9"/></svg>
<div class="t" style="left:539.0px;top:320.8px;font-size:10.6px;color:#000;letter-spacing:0.35px">Critical Battery Alarm</div>
<div class="abs" style="left:508px;top:334.2px;width:1px;height:16px;border-left:1px dotted #777"></div>
<div class="abs" style="left:509px;top:342.2px;width:12px;height:1px;border-top:1px dotted #777"></div>
<svg style="left:522px;top:336px;" width="9" height="12" viewBox="0 0 9 12"><path d="M1 4h2l4-3v10l-4-3h-2z" fill="#fff" stroke="#555" stroke-width="0.9"/></svg>
<div class="t" style="left:539.0px;top:336.9px;font-size:10.6px;color:#000;letter-spacing:0.35px">Critical Stop</div>
<div class="abs" style="left:494.0px;top:360.0px;width:13.0px;height:13.0px;background:#0a62c8;border-radius:2px"></div>
<svg style="left:496px;top:362px;" width="9" height="9" viewBox="0 0 9 9"><path d="M1 4.5 L3.5 7 L8 1.8" fill="none" stroke="#fff" stroke-width="1.3"/></svg>
<div class="t" style="left:510.0px;top:361.6px;font-size:10.6px;color:#000;letter-spacing:0.35px"><u>P</u>lay Windows Startup sound</div>
<div class="t" style="left:494.4px;top:383.7px;font-size:10.6px;color:#9a9a9a;letter-spacing:0.35px"><u>S</u>ounds:</div>
<div class="abs" style="left:494.5px;top:400.4px;width:187.0px;height:20.0px;background:#f9f9f9;border:1px solid #e3e3e3;border-radius:3px"></div>
<div class="t" style="left:498.5px;top:405.7px;font-size:10.6px;color:#8a8a8a;letter-spacing:0.35px">(None)</div>
<svg style="left:668px;top:408px;" width="10" height="6" viewBox="0 0 10 6"><path d="M0.5 0.5 L5 5 L9.5 0.5" fill="none" stroke="#aaa"/></svg>
<div class="btnd" style="left:690.5px;top:401.5px;width:71.7px;height:19.5px"></div>
<svg style="left:710px;top:405px;" width="12" height="13" viewBox="0 0 12 13"><path d="M0 0L12 6.5L0 13Z" fill="#3aa040"/></svg>
<div class="t" style="left:724.0px;top:406.7px;font-size:10.6px;color:#8a8a8a;letter-spacing:0.35px"><u>T</u>est</div>
<div class="btnd" style="left:768.4px;top:401.5px;width:71.9px;height:19.5px"></div>
<div class="t" style="left:504.3px;width:600px;text-align:center;top:406.7px;font-size:10.6px;color:#8a8a8a;letter-spacing:0.35px"><u>B</u>rowse...</div>
<div class="btn" style="left:625.4px;top:450.4px;width:72px;height:20px"></div>
<div class="t" style="left:361.4px;width:600px;text-align:center;top:454.9px;font-size:11px;color:#000;">OK</div>
<div class="btn" style="left:706.4px;top:450.4px;width:71.9px;height:20px"></div>
<div class="t" style="left:442.3px;width:600px;text-align:center;top:454.9px;font-size:11px;color:#000;">Cancel</div>
<div class="btnd" style="left:787.6px;top:450.4px;width:71.9px;height:20px"></div>
<div class="t" style="left:523.5px;width:600px;text-align:center;top:454.9px;font-size:11px;color:#8a8a8a;"><u>A</u>pply</div>
<div class="abs" style="left:891.0px;top:26.0px;width:810.5px;height:234.0px;background:#202020;border-radius:8px;box-shadow:0 0 0 1px rgba(0,0,0,.14),0 3px 12px rgba(0,0,0,.22);box-shadow:0 0 0 1px rgba(80,80,80,.5),0 4px 18px rgba(0,0,0,.35)"></div>
<svg style="left:1582.1px;top:39.5px" width="11" height="1"><rect width="11" height="1" fill="#cfcfcf"/></svg>
<svg style="left:1627.3px;top:34.5px" width="11" height="11"><rect x="0.5" y="0.5" width="10" height="10" rx="1" fill="none" stroke="#cfcfcf" stroke-width="1"/></svg>
<svg style="left:1673.1px;top:34.5px" width="11" height="11"><path d="M0 0L11 11M11 0L0 11" stroke="#cfcfcf" stroke-width="1"/></svg>
<svg style="left:904px;top:76px;" width="15" height="14" viewBox="0 0 15 14"><path d="M7 1 L1 7 L7 13 M1 7 H14" fill="none" stroke="#e6e6e6" stroke-width="1.3"/></svg>
<svg style="left:939px;top:76px;" width="15" height="14" viewBox="0 0 15 14"><path d="M8 1 L14 7 L8 13 M14 7 H1" fill="none" stroke="#9a9a9a" stroke-width="1.3"/></svg>
<svg style="left:972px;top:80px;" width="10" height="6" viewBox="0 0 10 6"><path d="M0.5 0.5 L5 5 L9.5 0.5" fill="none" stroke="#dcdcdc" stroke-width="1.3"/></svg>
<svg style="left:999px;top:75px;" width="14" height="15" viewBox="0 0 14 15"><path d="M1 7 L7 1 L13 7 M7 1 V15" fill="none" stroke="#e6e6e6" stroke-width="1.3"/></svg>
<div class="abs" style="left:1028.3px;top:66.6px;width:268.4px;height:33.6px;background:#1c1c1c;border:1px solid #4a4a4a"></div>
<svg style="left:1037px;top:74px;" width="16" height="14" viewBox="0 0 16 14"><rect x="0" y="0" width="4" height="4" fill="#3aa0f0"/><rect x="5" y="0" width="4" height="4" fill="#3aa0f0"/><rect x="0" y="5" width="4" height="4" fill="#3aa0f0"/><path d="M4 7 H13 L16 10 V14 H2 V10Z" fill="#ddd"/><rect x="3" y="11" width="1.5" height="1.5" fill="#3c3"/></svg>
<svg style="left:1059px;top:79px;" width="5" height="8" viewBox="0 0 5 8"><path d="M0.5 0.5 L4 4 L0.5 7.5" fill="none" stroke="#eee" stroke-width="1.2"/></svg>
<div class="t" style="left:1073.6px;top:77.2px;font-size:11.5px;color:#f0f0f0;">This ...</div>
<svg style="left:1115px;top:79px;" width="5" height="8" viewBox="0 0 5 8"><path d="M0.5 0.5 L4 4 L0.5 7.5" fill="none" stroke="#eee" stroke-width="1.2"/></svg>
<div class="t" style="left:1126.8px;top:77.2px;font-size:11.5px;color:#f0f0f0;">WinToUS...</div>
<svg style="left:1235px;top:81px;" width="10" height="6" viewBox="0 0 10 6"><path d="M0.5 0.5 L5 5 L9.5 0.5" fill="none" stroke="#ddd" stroke-width="1.2"/></svg>
<svg style="left:1270px;top:76px;" width="13" height="14" viewBox="0 0 13 14"><path d="M11.5 7 A5.5 5.5 0 1 1 9.5 2.5 M9.5 0 V3 H6.5" fill="none" stroke="#ddd" stroke-width="1.3"/></svg>
<div class="abs" style="left:1309.2px;top:66.6px;width:380.3px;height:33.6px;background:#1c1c1c;border:1px solid #4a4a4a"></div>
<div class="t" style="left:1318.0px;top:77.2px;font-size:11.5px;color:#9a9a9a;">Search WinToUSB (C:)</div>
<svg style="left:1662px;top:76px;" width="14" height="14" viewBox="0 0 14 14"><circle cx="9" cy="5" r="3.8" fill="none" stroke="#bbb" stroke-width="1.3"/><path d="M6.5 7.5 L1 13" stroke="#bbb" stroke-width="1.5"/></svg>
<div class="abs" style="left:891.0px;top:110.8px;width:810.5px;height:31.0px;background:#f3f4f8"></div>
<div class="t" style="left:909.5px;top:120.0px;font-size:11.5px;color:#1e3a6e;">Organize</div>
<svg style="left:961px;top:123px;" width="8" height="5" viewBox="0 0 8 5"><path d="M0 0H8L4 5Z" fill="#1e3a6e"/></svg>
<div class="t" style="left:1000.4px;top:120.0px;font-size:11.5px;color:#1e3a6e;">Give access to</div>
<svg style="left:1079px;top:123px;" width="8" height="5" viewBox="0 0 8 5"><path d="M0 0H8L4 5Z" fill="#1e3a6e"/></svg>
<div class="t" style="left:1118.2px;top:120.0px;font-size:11.5px;color:#1e3a6e;">New folder</div>
<svg style="left:1581px;top:119px;" width="13" height="12" viewBox="0 0 13 12"><path d="M0 1H13M0 4H13M0 7H13M0 10H13" stroke="#222" stroke-width="1.2"/></svg>
<svg style="left:1605px;top:123px;" width="8" height="5" viewBox="0 0 8 5"><path d="M0 0H8L4 5Z" fill="#1e3a6e"/></svg>
<svg style="left:1635px;top:119px;" width="16" height="13" viewBox="0 0 16 13"><rect x="0.5" y="0.5" width="15" height="12" fill="#fff" stroke="#777"/><rect x="9" y="1" width="6" height="11" fill="#3a8ee8"/><path d="M5 1V12" stroke="#777"/></svg>
<svg style="left:1670px;top:117px;" width="16" height="16" viewBox="0 0 16 16"><circle cx="8" cy="8" r="8" fill="#1e7ed8"/><text x="8" y="12.5" font-size="12" font-weight="bold" text-anchor="middle" fill="#fff" font-family="Liberation Sans">?</text></svg>
<div class="abs" style="left:893.0px;top:142.0px;width:154.0px;height:94.7px;background:#191919"></div>
<div class="abs" style="left:1047.4px;top:142.0px;width:3.6px;height:94.7px;background:#e8e8e8"></div>
<div class="abs" style="left:1038.0px;top:187.0px;width:1.5px;height:17.0px;background:#8a8a8a"></div>
<svg style="left:909px;top:155px;" width="6" height="9" viewBox="0 0 6 9"><path d="M0.5 0.5 L4.5 4.5 L0.5 8.5" fill="none" stroke="#8a8a8a" stroke-width="1.2"/></svg>
<div class="t" style="left:950.0px;top:154.1px;font-size:11.5px;color:#f0f0f0;">Desktop</div>
<svg style="left:909px;top:187px;" width="6" height="9" viewBox="0 0 6 9"><path d="M0.5 0.5 L4.5 4.5 L0.5 8.5" fill="none" stroke="#8a8a8a" stroke-width="1.2"/></svg>
<div class="t" style="left:950.0px;top:185.8px;font-size:11.5px;color:#f0f0f0;">Documents</div>
<svg style="left:909px;top:219px;" width="6" height="9" viewBox="0 0 6 9"><path d="M0.5 0.5 L4.5 4.5 L0.5 8.5" fill="none" stroke="#8a8a8a" stroke-width="1.2"/></svg>
<div class="t" style="left:950.0px;top:217.7px;font-size:11.5px;color:#f0f0f0;">Downloads</div>
<svg style="left:929px;top:153px;" width="16" height="13" viewBox="0 0 16 13"><rect x="0" y="0" width="16" height="12" rx="1.5" fill="#2aa8e0"/><rect x="2" y="2" width="2" height="2" fill="#fff"/><rect x="2" y="5" width="2" height="2" fill="#fff"/></svg>
<svg style="left:932px;top:184px;" width="11" height="15" viewBox="0 0 11 15"><rect x="0.5" y="0.5" width="10" height="14" rx="1" fill="#d8dce6" stroke="#9aa"/><path d="M2.5 4H8.5M2.5 6.5H8.5M2.5 9H8.5" stroke="#7a8090"/></svg>
<svg style="left:930px;top:215px;" width="15" height="16" viewBox="0 0 15 16"><path d="M7.5 0V10M3 6L7.5 10.5L12 6" fill="none" stroke="#2ab87a" stroke-width="1.6"/><path d="M1 14.5H14" stroke="#2ab87a" stroke-width="1.6"/></svg>
<div class="abs" style="left:1051.0px;top:142.0px;width:650.5px;height:94.7px;background:#191919"></div>
<div class="t" style="left:1081.0px;top:148.8px;font-size:11.5px;color:#e8e8e8;">Name</div>
<div class="abs" style="left:1322.3px;top:142.0px;width:1.0px;height:25.0px;background:#3a3a3a"></div>
<div class="abs" style="left:1466.4px;top:142.0px;width:1.0px;height:25.0px;background:#3a3a3a"></div>
<div class="abs" style="left:1586.5px;top:142.0px;width:1.0px;height:25.0px;background:#3a3a3a"></div>
<div class="abs" style="left:1666.5px;top:142.0px;width:1.0px;height:25.0px;background:#3a3a3a"></div>
<div class="t" style="left:1329.2px;top:148.8px;font-size:11.5px;color:#e8e8e8;">Date modified</div>
<svg style="left:1391px;top:142px;" width="8" height="4" viewBox="0 0 8 4"><path d="M0.5 0.5L4 3.5L7.5 0.5" fill="none" stroke="#aaa"/></svg>
<div class="t" style="left:1473.3px;top:148.8px;font-size:11.5px;color:#e8e8e8;">Type</div>
<div class="t" style="left:1593.0px;top:148.8px;font-size:11.5px;color:#e8e8e8;">Size</div>
<div class="abs" style="left:1693.0px;top:159.5px;width:1.5px;height:16.5px;background:#8a8a8a"></div>
<svg style="left:1068px;top:179px;" width="17" height="14" viewBox="0 0 17 14"><path d="M0 1.5 Q0 0 1.5 0 H6 L8 2 H15.5 Q17 2 17 3.5 V12.5 Q17 14 15.5 14 H1.5 Q0 14 0 12.5Z" fill="#f5c842"/><path d="M0 4 H17 V12.5 Q17 14 15.5 14 H1.5 Q0 14 0 12.5Z" fill="#ffd862"/></svg>
<div class="t" style="left:1089.0px;top:180.9px;font-size:11.5px;color:#f0f0f0;">Program Files</div>
<div class="t" style="left:1329.2px;top:180.9px;font-size:11.5px;color:#e8e8e8;">6/10/2021 8:57 AM</div>
<div class="t" style="left:1473.3px;top:180.9px;font-size:11.5px;color:#e8e8e8;">File folder</div>
<svg style="left:1068px;top:210px;" width="17" height="14" viewBox="0 0 17 14"><path d="M0 1.5 Q0 0 1.5 0 H6 L8 2 H15.5 Q17 2 17 3.5 V12.5 Q17 14 15.5 14 H1.5 Q0 14 0 12.5Z" fill="#f5c842"/><path d="M0 4 H17 V12.5 Q17 14 15.5 14 H1.5 Q0 14 0 12.5Z" fill="#ffd862"/></svg>
<div class="t" style="left:1089.0px;top:211.8px;font-size:11.5px;color:#f0f0f0;">Intel</div>
<div class="t" style="left:1329.2px;top:211.8px;font-size:11.5px;color:#e8e8e8;">5/10/2021 6:07 PM</div>
<div class="t" style="left:1473.3px;top:211.8px;font-size:11.5px;color:#e8e8e8;">File folder</div>
<div class="abs" style="left:891.0px;top:236.7px;width:810.5px;height:23.3px;background:#1c1c1c;border-radius:0 0 8px 8px"></div>
<div class="t" style="left:905.6px;top:242.9px;font-size:11.5px;color:#e8e8e8;">10 items</div>
<div class="abs" style="left:959.0px;top:242.0px;width:1.0px;height:13.0px;background:#ccc"></div>
<div class="abs" style="left:1656.0px;top:238.0px;width:20.0px;height:19.0px;border:1px solid #3a9ad8;background:#2a3a48"></div>
<svg style="left:1659px;top:241px;" width="14" height="13" viewBox="0 0 14 13"><rect x="0.5" y="0.5" width="13" height="12" fill="#ddd"/><path d="M2 3H12M2 5.5H12M2 8H12M2 10.5H12" stroke="#333"/></svg>
<svg style="left:1680px;top:240px;" width="14" height="14" viewBox="0 0 14 14"><rect x="0.5" y="0.5" width="13" height="13" fill="#333" stroke="#ddd"/><rect x="2" y="2" width="10" height="8" fill="#fff"/></svg>
<div class="abs" style="left:1720.0px;top:36.0px;width:770.0px;height:466.0px;background:#fff;border-radius:8px;box-shadow:0 0 0 1px rgba(0,0,0,.14),0 3px 12px rgba(0,0,0,.22);box-shadow:0 0 0 1px rgba(60,60,60,.4),0 4px 18px rgba(0,0,0,.32)"></div>
<div class="abs" style="left:1720.0px;top:36.0px;width:770.0px;height:85.0px;background:#202020;border-radius:8px 8px 0 0"></div>
<svg style="left:2370.3px;top:49.5px" width="11" height="1"><rect width="11" height="1" fill="#cfcfcf"/></svg>
<svg style="left:2415.3px;top:44.5px" width="11" height="11"><rect x="0.5" y="0.5" width="10" height="10" rx="1" fill="none" stroke="#cfcfcf" stroke-width="1"/></svg>
<svg style="left:2461.3px;top:44.5px" width="11" height="11"><path d="M0 0L11 11M11 0L0 11" stroke="#cfcfcf" stroke-width="1"/></svg>
<svg style="left:1734px;top:86px;" width="15" height="14" viewBox="0 0 15 14"><path d="M7 1 L1 7 L7 13 M1 7 H14" fill="none" stroke="#9a9a9a" stroke-width="1.3"/></svg>
<svg style="left:1769px;top:86px;" width="15" height="14" viewBox="0 0 15 14"><path d="M8 1 L14 7 L8 13 M14 7 H1" fill="none" stroke="#9a9a9a" stroke-width="1.3"/></svg>
<svg style="left:1801px;top:90px;" width="10" height="6" viewBox="0 0 10 6"><path d="M0.5 0.5 L5 5 L9.5 0.5" fill="none" stroke="#9a9a9a" stroke-width="1.3"/></svg>
<svg style="left:1828px;top:85px;" width="14" height="15" viewBox="0 0 14 15"><path d="M1 7 L7 1 L13 7 M7 1 V15" fill="none" stroke="#e6e6e6" stroke-width="1.3"/></svg>
<div class="abs" style="left:1857.3px;top:76.5px;width:227.0px;height:33.0px;background:#1c1c1c;border:1px solid #4a4a4a"></div>
<svg style="left:1866px;top:85px;" width="16" height="14" viewBox="0 0 16 14"><rect x="0" y="0" width="16" height="14" fill="#3a9ae8"/><rect x="2" y="2" width="5" height="5" fill="#fff"/><rect x="3" y="3" width="3" height="3" fill="#f08020"/><path d="M9 3H14M9 6H14M2 10H14" stroke="#fff"/></svg>
<svg style="left:1888px;top:89px;" width="5" height="8" viewBox="0 0 5 8"><path d="M0.5 0.5 L4 4 L0.5 7.5" fill="none" stroke="#eee" stroke-width="1.2"/></svg>
<div class="t" style="left:1903.0px;top:87.2px;font-size:11.7px;color:#f0f0f0;">Control Panel</div>
<svg style="left:2023px;top:91px;" width="10" height="6" viewBox="0 0 10 6"><path d="M0.5 0.5 L5 5 L9.5 0.5" fill="none" stroke="#ddd" stroke-width="1.2"/></svg>
<svg style="left:2058px;top:86px;" width="13" height="14" viewBox="0 0 13 14"><path d="M11.5 7 A5.5 5.5 0 1 1 9.5 2.5 M9.5 0 V3 H6.5" fill="none" stroke="#ddd" stroke-width="1.3"/></svg>
<div class="abs" style="left:2097.0px;top:76.5px;width:380.3px;height:33.0px;background:#1c1c1c;border:1px solid #4a4a4a"></div>
<div class="t" style="left:2106.0px;top:87.3px;font-size:11.3px;color:#9a9a9a;">Search Control Panel</div>
<svg style="left:2450px;top:86px;" width="14" height="14" viewBox="0 0 14 14"><circle cx="9" cy="5" r="3.8" fill="none" stroke="#bbb" stroke-width="1.3"/><path d="M6.5 7.5 L1 13" stroke="#bbb" stroke-width="1.5"/></svg>
<div class="t" style="left:1792.4px;top:143.6px;font-size:15.8px;color:#1e3c9a;">Adjust your computer&#x27;s settings</div>
<div class="t" style="left:2287.0px;top:147.2px;font-size:11.7px;color:#555;">View by:</div>
<div class="t" style="left:2344.4px;top:147.2px;font-size:11.7px;color:#1a62c6;">Category</div>
<svg style="left:2397px;top:150px;" width="8" height="5" viewBox="0 0 8 5"><path d="M0 0H8L4 5Z" fill="#1a62c6"/></svg>
<div class="t" style="left:1853.6px;top:195.2px;font-size:15.3px;color:#167a1e;">System and Security</div>
<div class="t" style="left:1853.6px;top:214.6px;font-size:11.8px;color:#1a56c4;">Review your computer&#x27;s status</div>
<div class="t" style="left:1853.6px;top:231.7px;font-size:11.8px;color:#1a56c4;">Save backup copies of your files with File</div>
<div class="t" style="left:1853.6px;top:246.6px;font-size:11.8px;color:#1a56c4;">History</div>
<div class="t" style="left:1853.6px;top:263.7px;font-size:11.8px;color:#1a56c4;">Backup and Restore (Windows 7)</div>
<div class="t" style="left:1853.6px;top:293.9px;font-size:15.3px;color:#167a1e;">Network and Internet</div>
<div class="t" style="left:1853.6px;top:317.9px;font-size:11.8px;color:#1a56c4;">View network status and tasks</div>
<div class="t" style="left:1853.6px;top:344.0px;font-size:15.3px;color:#167a1e;">Hardware and Sound</div>
<div class="t" style="left:1853.6px;top:363.7px;font-size:11.8px;color:#1a56c4;">View devices and printers</div>
<div class="t" style="left:1853.6px;top:380.8px;font-size:11.8px;color:#1a56c4;">Add a device</div>
<div class="t" style="left:1853.6px;top:398.0px;font-size:11.8px;color:#1a56c4;">Adjust commonly used mobility settings</div>
<div class="t" style="left:1853.6px;top:428.2px;font-size:15.3px;color:#167a1e;">Programs</div>
<div class="t" style="left:1853.6px;top:452.1px;font-size:11.8px;color:#1a56c4;">Uninstall a program</div>
<div class="t" style="left:2166.0px;top:197.5px;font-size:15.3px;color:#167a1e;">User Accounts</div>
<div class="t" style="left:2182.3px;top:222.1px;font-size:11.8px;color:#1a56c4;">Change account type</div>
<svg style="left:2165px;top:221px;" width="13" height="14" viewBox="0 0 13 14"><path d="M6.5 0 L13 2.5 V7 Q13 12 6.5 14 Q0 12 0 7 V2.5Z" fill="#f5c400"/><path d="M6.5 0 L13 2.5 V7 H6.5Z M6.5 7 V14 Q0 12 0 7Z" fill="#2a7ad8"/></svg>
<div class="t" style="left:2166.0px;top:259.7px;font-size:15.3px;color:#167a1e;">Appearance and Personalization</div>
<div class="t" style="left:2166.0px;top:306.9px;font-size:15.3px;color:#167a1e;">Clock and Region</div>
<div class="t" style="left:2166.0px;top:330.8px;font-size:11.8px;color:#1a56c4;">Change date, time, or number formats</div>
<div class="t" style="left:2166.0px;top:356.9px;font-size:15.3px;color:#167a1e;">Ease of Access</div>
<div class="t" style="left:2166.0px;top:377.1px;font-size:11.8px;color:#1a56c4;">Let Windows suggest settings</div>
<div class="t" style="left:2166.0px;top:393.8px;font-size:11.8px;color:#1a56c4;">Optimize visual display</div>
<svg style="left:1796px;top:198px;" width="44" height="43" viewBox="0 0 44 43"><path d="M1 4 Q12 6 19 0 Q26 6 37 4 V18 Q37 34 19 40 Q1 34 1 18Z" fill="#1a78d8"/><circle cx="31" cy="30" r="12" fill="#1fb89a"/><path d="M31 18 A12 12 0 0 1 43 30 H31Z" fill="#48e0c8"/><path d="M31 30 L23 39 A12 12 0 0 1 19 30Z" fill="#3ad0b4"/></svg>
<svg style="left:1794px;top:290px;" width="45" height="46" viewBox="0 0 45 46"><rect x="4" y="6" width="41" height="29" rx="1" fill="#1a8ee0" stroke="#2a2a2a" stroke-width="1"/><rect x="4" y="35" width="41" height="9" rx="2" fill="#2ac048"/><rect x="4" y="35" width="6" height="9" fill="#ddd"/><rect x="39" y="35" width="6" height="9" fill="#ddd"/><circle cx="12" cy="10" r="10" fill="#3a8ad0"/><path d="M5 6 Q10 2 14 6 Q12 10 7 12Z M12 14 Q16 12 18 16 Q14 19 12 17Z" fill="#9ad0f0"/></svg>
<svg style="left:1794px;top:353px;" width="46" height="42" viewBox="0 0 46 42"><path d="M10 0H38L40 6H8Z" fill="#555"/><rect x="12" y="1" width="20" height="3" fill="#2ad0c0"/><rect x="2" y="6" width="44" height="18" rx="2" fill="#d8d8d8" stroke="#555"/><rect x="8" y="15" width="32" height="8" fill="#222"/><rect x="10" y="23" width="28" height="5" fill="#fff" stroke="#555"/><rect x="28" y="18" width="18" height="24" rx="2" fill="#444"/><circle cx="37" cy="31" r="6" fill="#888" stroke="#222"/><circle cx="37" cy="31" r="2.5" fill="#333"/></svg>
<svg style="left:1794px;top:429px;" width="48" height="43" viewBox="0 0 48 43"><rect x="0.5" y="0.5" width="47" height="35" fill="#fafafa" stroke="#555"/><rect x="15" y="7" width="18" height="24" fill="#1a78d8"/><path d="M5 8H11M5 12H11M5 16H11M5 20H11M37 8H43M37 12H43" stroke="#777"/><circle cx="34" cy="30" r="12" fill="#d0d0d0" stroke="#aaa"/><circle cx="34" cy="30" r="3" fill="#fff" stroke="#999"/></svg>
<svg style="left:2107px;top:195px;" width="48" height="48" viewBox="0 0 48 48"><circle cx="24" cy="11" r="11" fill="#1fb8a0"/><path d="M4 36 Q4 26 14 26 H34 Q44 26 44 36 V40 Q44 48 34 48 H14 Q4 48 4 40Z" fill="#1fb8a0"/></svg>
<svg style="left:2107px;top:251px;" width="48" height="43" viewBox="0 0 48 43"><rect x="0.5" y="3" width="43" height="31" fill="#1a8ee0" stroke="#333"/><rect x="18" y="34" width="8" height="5" fill="#555"/><rect x="12" y="39" width="20" height="3" fill="#555"/><rect x="26" y="0" width="22" height="18" fill="#fff" stroke="#555"/><rect x="29" y="3" width="4" height="4" fill="#e03030"/><rect x="35" y="3" width="4" height="4" fill="#30a030"/><rect x="41" y="3" width="4" height="4" fill="#3060e0"/><rect x="29" y="9" width="4" height="4" fill="#f0a020"/><rect x="35" y="9" width="4" height="4" fill="#8030c0"/><rect x="41" y="9" width="4" height="4" fill="#20b0c0"/></svg>
<svg style="left:2106px;top:303px;" width="49" height="49" viewBox="0 0 49 49"><defs><radialGradient id="glb" cx="0.3" cy="0.25" r="0.8"><stop offset="0" stop-color="#9ad4f0"/><stop offset="0.5" stop-color="#3a88c0"/><stop offset="1" stop-color="#1e5a88"/></radialGradient></defs><circle cx="25" cy="24" r="23.5" fill="url(#glb)"/><path d="M10 10 Q16 3 24 5 Q22 10 16 12 Q12 16 10 14Z M34 8 Q42 12 44 22 Q40 26 36 20 Q34 14 34 8Z" fill="#c8e8f8" opacity="0.8"/><circle cx="17" cy="31.5" r="15.5" fill="#fafafa" stroke="#9a9a9a" stroke-width="1.6"/><path d="M14.5 23.5V33H22.5" fill="none" stroke="#444" stroke-width="2"/></svg>
<svg style="left:2106px;top:357px;" width="49" height="49" viewBox="0 0 49 49"><defs><linearGradient id="eag" x1="0" y1="0" x2="0.6" y2="1"><stop offset="0" stop-color="#2a98e8"/><stop offset="1" stop-color="#0a62c0"/></linearGradient></defs><circle cx="24.5" cy="24.5" r="24" fill="url(#eag)"/><circle cx="24.5" cy="12" r="5" fill="#fff"/><path d="M12 13 Q18 20 24.5 20 Q31 20 37 13 L40 16 Q34 23 30 25 L31 40 L27 40 L24.5 31 L22 40 L18 40 L19 25 Q15 23 9 16Z" fill="#fff"/></svg>
<div class="abs" style="left:908.0px;top:271.0px;width:783.0px;height:456.0px;background:#fff;border-radius:8px;box-shadow:0 0 0 1px rgba(0,0,0,.14),0 3px 12px rgba(0,0,0,.22);"></div>
<svg style="left:917px;top:277px;" width="16" height="16" viewBox="0 0 16 16"><rect x="1.5" y="1.5" width="12" height="13" fill="#eef4fb" stroke="#4a6aa0"/><path d="M4 5H6M4 7H12M4 9H12M4 11H12" stroke="#4a80c8"/><path d="M4 4 L5 2 L6 4" stroke="#e06020" fill="none"/></svg>
<div class="abs" style="left:938.0px;top:279.0px;width:1.0px;height:13.0px;background:#999"></div>
<svg style="left:950px;top:278px;" width="14" height="14" viewBox="0 0 14 14"><rect x="0.5" y="0.5" width="13" height="13" rx="1" fill="#6a50b0"/><rect x="3" y="1" width="8" height="5" fill="#fff"/><rect x="3" y="9" width="8" height="4" fill="#ccc"/></svg>
<svg style="left:971px;top:278px;" width="15" height="14" viewBox="0 0 15 14"><path d="M3 5 Q7 1 11 4 Q15 8 11 13" fill="none" stroke="#8aa8d0" stroke-width="2.5"/><path d="M0 6 L5 1 L5 9Z" fill="#8aa8d0"/></svg>
<svg style="left:992px;top:278px;" width="15" height="14" viewBox="0 0 15 14"><path d="M12 5 Q8 1 4 4 Q0 8 4 13" fill="none" stroke="#8aa8d0" stroke-width="2.5"/><path d="M15 6 L10 1 L10 9Z" fill="#8aa8d0"/></svg>
<svg style="left:1014px;top:282px;" width="8" height="8" viewBox="0 0 8 8"><path d="M0 1H8M0 3L4 7L8 3Z" fill="#222" stroke="#222" stroke-width="1"/></svg>
<div class="abs" style="left:1031.0px;top:279.0px;width:1.0px;height:13.0px;background:#999"></div>
<div class="t" style="left:1039.0px;top:279.6px;font-size:12px;color:#8a8a8a;">Document - WordPad</div>
<svg style="left:1572.0px;top:284.5px" width="11" height="1"><rect width="11" height="1" fill="#555"/></svg>
<svg style="left:1617.0px;top:279.5px" width="11" height="11"><rect x="0.5" y="0.5" width="10" height="10" rx="1" fill="none" stroke="#555" stroke-width="1"/></svg>
<svg style="left:1663.25px;top:279.5px" width="11" height="11"><path d="M0 0L11 11M11 0L0 11" stroke="#555" stroke-width="1"/></svg>
<div class="abs" style="left:908.0px;top:301.3px;width:56.0px;height:22.7px;background:#1e6fcd"></div>
<div class="t" style="left:636.0px;width:600px;text-align:center;top:306.6px;font-size:11.7px;color:#fff;">File</div>
<div class="abs" style="left:964.0px;top:301.3px;width:58.0px;height:23.5px;background:#f5f6f7;border:1px solid #dadbdc;border-bottom:none"></div>
<div class="t" style="left:693.0px;width:600px;text-align:center;top:306.6px;font-size:11.7px;color:#222;">Home</div>
<div class="t" style="left:749.0px;width:600px;text-align:center;top:306.6px;font-size:11.7px;color:#222;">View</div>
<svg style="left:1653px;top:308px;" width="11" height="6" viewBox="0 0 11 6"><path d="M0.5 5.5 L5.5 0.5 L10.5 5.5" fill="none" stroke="#666"/></svg>
<svg style="left:1672px;top:304px;" width="16" height="16" viewBox="0 0 16 16"><circle cx="8" cy="8" r="8" fill="#1e6fcd"/><text x="8" y="12.5" font-size="12" font-weight="bold" text-anchor="middle" fill="#fff" font-family="Liberation Sans">?</text></svg>
<div class="abs" style="left:908.0px;top:324.0px;width:783.0px;height:92.7px;background:#f5f6f7;border-top:1px solid #dadbdc;border-bottom:1px solid #dadbdc"></div>
<div class="abs" style="left:1014.6px;top:328.0px;width:1.0px;height:85.0px;background:#e2e3e4"></div>
<div class="abs" style="left:1237.4px;top:328.0px;width:1.0px;height:85.0px;background:#e2e3e4"></div>
<div class="abs" style="left:1367.9px;top:328.0px;width:1.0px;height:85.0px;background:#e2e3e4"></div>
<div class="abs" style="left:1563.5px;top:328.0px;width:1.0px;height:85.0px;background:#e2e3e4"></div>
<div class="abs" style="left:1645.0px;top:328.0px;width:1.0px;height:85.0px;background:#e2e3e4"></div>
<div class="t" style="left:660.6px;width:600px;text-align:center;top:401.1px;font-size:11.5px;color:#444;">Clipboard</div>
<div class="t" style="left:825.0px;width:600px;text-align:center;top:401.1px;font-size:11.5px;color:#444;">Font</div>
<div class="t" style="left:1001.4px;width:600px;text-align:center;top:401.1px;font-size:11.5px;color:#444;">Paragraph</div>
<div class="t" style="left:1164.5px;width:600px;text-align:center;top:401.1px;font-size:11.5px;color:#444;">Insert</div>
<div class="t" style="left:1303.5px;width:600px;text-align:center;top:401.1px;font-size:11.5px;color:#444;">Editing</div>
<svg style="left:922px;top:332px;" width="26" height="30" viewBox="0 0 26 30"><rect x="1" y="3" width="24" height="26" rx="2" fill="#c08a4a" stroke="#8a5a2a"/><rect x="4" y="6" width="18" height="21" fill="#fff"/><path d="M6 10H20M6 13H20M6 16H20M6 19H20M6 22H20" stroke="#c0c8d8"/><path d="M8 4 Q13 -2 18 4Z" fill="#888" stroke="#555"/></svg>
<div class="t" style="left:634.5px;width:600px;text-align:center;top:368.2px;font-size:11.5px;color:#333;">Paste</div>
<svg style="left:931px;top:385px;" width="7" height="4" viewBox="0 0 7 4"><path d="M0 0H7L3.5 4Z" fill="#333"/></svg>
<svg style="left:961px;top:333px;" width="11" height="14" viewBox="0 0 11 14"><path d="M2 0 L6 8 M9 0 L5 8" stroke="#a0a8b8" stroke-width="1.5"/><circle cx="3" cy="11" r="2.3" fill="none" stroke="#a0a8b8" stroke-width="1.3"/><circle cx="8" cy="11" r="2.3" fill="none" stroke="#a0a8b8" stroke-width="1.3"/></svg>
<div class="t" style="left:978.0px;top:333.9px;font-size:11.5px;color:#8a8a8a;">Cut</div>
<svg style="left:959px;top:355px;" width="15" height="15" viewBox="0 0 15 15"><rect x="0.5" y="0.5" width="8" height="10" fill="#f4f6fa" stroke="#a8b4c8"/><rect x="5.5" y="4.5" width="9" height="10" fill="#f4f6fa" stroke="#a8b4c8"/><path d="M7 7H13M7 9H13M7 11H13" stroke="#b8c4d8"/></svg>
<div class="t" style="left:978.0px;top:356.4px;font-size:11.5px;color:#8a8a8a;">Copy</div>
<div class="abs" style="left:1019.3px;top:337.4px;width:120.1px;height:21.4px;background:#fdfeff;border:1px solid #a9bcd6"></div>
<div class="abs" style="left:1139.4px;top:337.4px;width:43.3px;height:21.4px;background:#fdfeff;border:1px solid #a9bcd6"></div>
<div class="t" style="left:1022.4px;top:342.4px;font-size:11.5px;color:#111;">Calibri</div>
<div class="t" style="left:1143.6px;top:342.4px;font-size:11.5px;color:#111;">11</div>
<svg style="left:1129px;top:346px;" width="7" height="4" viewBox="0 0 7 4"><path d="M0 0H7L3.5 4Z" fill="#222"/></svg>
<svg style="left:1172px;top:346px;" width="7" height="4" viewBox="0 0 7 4"><path d="M0 0H7L3.5 4Z" fill="#222"/></svg>
<div class="t" style="left:1189px;top:340px;font-size:15px;font-family:Liberation Serif;font-weight:bold;color:#1e3a5f">A</div>
<svg style="left:1199px;top:340px;" width="6" height="3" viewBox="0 0 6 3"><path d="M0 3L3 0L6 3Z" fill="#1e88e5"/></svg>
<div class="t" style="left:1213px;top:344px;font-size:11px;font-family:Liberation Serif;font-weight:bold;color:#1e3a5f">A</div>
<svg style="left:1220px;top:341px;" width="6" height="3" viewBox="0 0 6 3"><path d="M0 0L3 3L6 0Z" fill="#1e88e5"/></svg>
<div class="t" style="left:1024.5px;top:369px;font-size:14px;font-family:Liberation Serif;font-weight:bold;color:#1e3a5f">B</div>
<div class="t" style="left:1049px;top:369px;font-size:14px;font-family:Liberation Serif;font-style:italic;font-weight:bold;color:#1e3a5f">I</div>
<div class="t" style="left:1072px;top:368px;font-size:14px;font-family:Liberation Serif;font-weight:bold;color:#1e3a5f;text-decoration:underline">U</div>
<div class="t" style="left:1093.5px;top:370px;font-size:11px;font-family:Liberation Serif;font-weight:bold;color:#1e3a5f;text-decoration:line-through">abc</div>
<div class="t" style="left:1119px;top:368px;font-size:13px;font-weight:bold;color:#1e3a5f">x</div>
<div class="t" style="left:1128px;top:375px;font-size:7px;font-weight:bold;color:#1e88e5">2</div>
<div class="t" style="left:1143px;top:370px;font-size:13px;font-weight:bold;color:#1e3a5f">x</div>
<div class="t" style="left:1152px;top:366px;font-size:7px;font-weight:bold;color:#1e88e5">2</div>
<div class="t" style="left:1168px;top:367px;font-size:15px;font-family:Liberation Serif;font-weight:bold;color:#1e3a5f">A</div>
<div class="abs" style="left:1167.2px;top:381.2px;width:15.8px;height:3.6px;background:#000"></div>
<svg style="left:1187px;top:375px;" width="7" height="4" viewBox="0 0 7 4"><path d="M0 0H7L3.5 4Z" fill="#222"/></svg>
<svg style="left:1200px;top:368px;" width="16" height="17" viewBox="0 0 16 17"><path d="M3 11 L11 2 L14 5 L6 13Z" fill="#f4f6fa" stroke="#6a7a98"/><path d="M3 11 L2 14 L6 13Z" fill="#f0c020"/><rect x="0.5" y="13.5" width="15" height="3" fill="#fff" stroke="#a8bcd8"/></svg>
<svg style="left:1220px;top:375px;" width="7" height="4" viewBox="0 0 7 4"><path d="M0 0H7L3.5 4Z" fill="#222"/></svg>
<svg style="left:1247px;top:341px;" width="16" height="16" viewBox="0 0 16 16"><rect x="5" y="0.0" width="11" height="1.4" fill="#1e3a5f"/><rect x="8" y="3.2" width="8" height="1.4" fill="#1e3a5f"/><rect x="5" y="6.4" width="11" height="1.4" fill="#1e3a5f"/><rect x="8" y="9.600000000000001" width="8" height="1.4" fill="#1e3a5f"/></svg>
<svg style="left:1246px;top:343px;" width="6" height="6" viewBox="0 0 6 6"><path d="M6 0L0 3L6 6Z" fill="#1e88e5"/></svg>
<svg style="left:1269px;top:341px;" width="16" height="16" viewBox="0 0 16 16"><rect x="5" y="0.0" width="11" height="1.4" fill="#1e3a5f"/><rect x="8" y="3.2" width="8" height="1.4" fill="#1e3a5f"/><rect x="5" y="6.4" width="11" height="1.4" fill="#1e3a5f"/><rect x="8" y="9.600000000000001" width="8" height="1.4" fill="#1e3a5f"/></svg>
<svg style="left:1269px;top:343px;" width="6" height="6" viewBox="0 0 6 6"><path d="M0 0L6 3L0 6Z" fill="#1e88e5"/></svg>
<svg style="left:1295px;top:341px;" width="14" height="13" viewBox="0 0 14 13"><circle cx="1.8" cy="1.8" r="1.8" fill="#1e88e5"/><circle cx="1.8" cy="6.5" r="1.8" fill="#1e88e5"/><circle cx="1.8" cy="11.2" r="1.8" fill="#1e88e5"/><path d="M5 1.8H14M5 6.5H14M5 11.2H14" stroke="#1e3a5f" stroke-width="1.3"/></svg>
<svg style="left:1315px;top:346px;" width="7" height="4" viewBox="0 0 7 4"><path d="M0 0H7L3.5 4Z" fill="#222"/></svg>
<svg style="left:1327px;top:340px;" width="14" height="16" viewBox="0 0 14 16"><path d="M2.5 0V16M0 3L2.5 0L5 3M0 13L2.5 16L5 13" fill="none" stroke="#1e88e5" stroke-width="1.3"/><path d="M7 4H14M7 7H14M7 10H14M7 13H14" stroke="#1e3a5f" stroke-width="1.2"/></svg>
<svg style="left:1349px;top:346px;" width="7" height="4" viewBox="0 0 7 4"><path d="M0 0H7L3.5 4Z" fill="#222"/></svg>
<div class="abs" style="left:1242.3px;top:366.2px;width:22.2px;height:21.4px;background:#cde4f7;border:1px solid #7eb4ea"></div>
<svg style="left:1247px;top:370px;" width="14" height="12" viewBox="0 0 14 12"><rect x="0" y="0" width="13" height="1.4" fill="#1e3a5f"/><rect x="0" y="3" width="9" height="1.4" fill="#1e3a5f"/><rect x="0" y="6" width="13" height="1.4" fill="#1e3a5f"/><rect x="0" y="9" width="9" height="1.4" fill="#1e3a5f"/></svg>
<svg style="left:1270px;top:370px;" width="14" height="12" viewBox="0 0 14 12"><rect x="0" y="0" width="13" height="1.4" fill="#1e3a5f"/><rect x="2" y="3" width="9" height="1.4" fill="#1e3a5f"/><rect x="0" y="6" width="13" height="1.4" fill="#1e3a5f"/><rect x="2" y="9" width="9" height="1.4" fill="#1e3a5f"/></svg>
<svg style="left:1294px;top:370px;" width="14" height="12" viewBox="0 0 14 12"><rect x="0" y="0" width="13" height="1.4" fill="#1e3a5f"/><rect x="4" y="3" width="9" height="1.4" fill="#1e3a5f"/><rect x="0" y="6" width="13" height="1.4" fill="#1e3a5f"/><rect x="4" y="9" width="9" height="1.4" fill="#1e3a5f"/></svg>
<svg style="left:1317px;top:370px;" width="14" height="12" viewBox="0 0 14 12"><rect x="0" y="0" width="13" height="1.4" fill="#1e3a5f"/><rect x="0" y="3" width="13" height="1.4" fill="#1e3a5f"/><rect x="0" y="6" width="13" height="1.4" fill="#1e3a5f"/><rect x="0" y="9" width="13" height="1.4" fill="#1e3a5f"/></svg>
<svg style="left:1343px;top:369px;" width="13" height="13" viewBox="0 0 13 13"><path d="M2 1H13M4 4H13M0 7H7M2 10H7" stroke="#1e3a5f" stroke-width="1.2"/><text x="7" y="12" font-size="10" fill="#1e88e5" font-family="Liberation Sans" font-weight="bold">¶</text></svg>
<svg style="left:1379px;top:335px;" width="30" height="26" viewBox="0 0 30 26"><rect x="0.5" y="0.5" width="29" height="25" fill="#fff" stroke="#888"/><rect x="2" y="2" width="26" height="22" fill="#5ab0e8"/><path d="M2 14 Q10 8 16 14 Q22 12 28 15 V24 H2Z" fill="#2a8050"/><path d="M2 19 H28 V24 H2Z" fill="#3a90d8"/><ellipse cx="20" cy="6" rx="6" ry="2.5" fill="#e8f4fc"/></svg>
<div class="t" style="left:1093.6px;width:600px;text-align:center;top:368.2px;font-size:11.5px;color:#333;">Picture</div>
<svg style="left:1390px;top:385px;" width="7" height="4" viewBox="0 0 7 4"><path d="M0 0H7L3.5 4Z" fill="#333"/></svg>
<svg style="left:1423px;top:332px;" width="33" height="32" viewBox="0 0 33 32"><ellipse cx="13" cy="18" rx="13" ry="10" fill="#cfe4f4" stroke="#6a90b8"/><circle cx="6" cy="17" r="2.2" fill="#e83030"/><circle cx="11" cy="12" r="2.2" fill="#50b040"/><circle cx="17" cy="10" r="2.2" fill="#f0b020"/><circle cx="13" cy="19" r="2" fill="#fff" stroke="#6a90b8"/><path d="M30 2 L15 30" stroke="#e08020" stroke-width="2.5"/><path d="M27 0 L33 4 L30 8 Z" fill="#d4a060"/></svg>
<div class="t" style="left:1138.5px;width:600px;text-align:center;top:368.2px;font-size:11.5px;color:#333;">Paint</div>
<div class="t" style="left:1138.5px;width:600px;text-align:center;top:381.6px;font-size:11.5px;color:#333;">drawing</div>
<svg style="left:1473px;top:333px;" width="32" height="30" viewBox="0 0 32 30"><rect x="0.5" y="0.5" width="30" height="24" fill="#f0f0f0" stroke="#888"/><rect x="2" y="3" width="27" height="3" fill="#2a5aa8"/><g fill="#3a8ae8"><rect x="3" y="8" width="4" height="3"/><rect x="9" y="8" width="4" height="3"/><rect x="15" y="8" width="4" height="3"/><rect x="21" y="8" width="4" height="3"/><rect x="3" y="13" width="4" height="3"/><rect x="9" y="13" width="4" height="3"/><rect x="15" y="13" width="4" height="3"/><rect x="3" y="18" width="4" height="3"/><rect x="9" y="18" width="4" height="3"/></g><circle cx="22" cy="21" r="8.5" fill="#fafafa" stroke="#888"/><path d="M22 15V21H27" fill="none" stroke="#333"/></svg>
<div class="t" style="left:1188.5px;width:600px;text-align:center;top:368.2px;font-size:11.5px;color:#333;">Date and</div>
<div class="t" style="left:1188.5px;width:600px;text-align:center;top:381.6px;font-size:11.5px;color:#333;">time</div>
<svg style="left:1520px;top:332px;" width="30" height="30" viewBox="0 0 30 30"><rect x="0.5" y="0.5" width="29" height="29" fill="#fff" stroke="#777"/><circle cx="20" cy="11" r="8" fill="#30a030"/><path d="M4 14 L12 11 L18 14 V26 L10 28 L4 26Z" fill="#4a9ae8"/><path d="M4 14 L10 17 L18 14 M10 17V28" fill="none" stroke="#2a6ab8"/></svg>
<div class="t" style="left:1235.1px;width:600px;text-align:center;top:368.2px;font-size:11.5px;color:#333;">Insert</div>
<div class="t" style="left:1235.1px;width:600px;text-align:center;top:381.6px;font-size:11.5px;color:#333;">object</div>
<svg style="left:1571px;top:333px;" width="15" height="13" viewBox="0 0 15 13"><rect x="0.5" y="3" width="6" height="9.5" rx="1" fill="#c0c8d8" stroke="#8090a8"/><rect x="8.5" y="3" width="6" height="9.5" rx="1" fill="#c0c8d8" stroke="#8090a8"/><rect x="2" y="0" width="3" height="3" fill="#8090a8"/><rect x="10" y="0" width="3" height="3" fill="#8090a8"/></svg>
<div class="t" style="left:1590.3px;top:334.1px;font-size:11.5px;color:#8a8a8a;">Find</div>
<div class="t" style="left:1571px;top:352px;font-size:8px;color:#8090a8;font-weight:bold;line-height:7px">ab<br>&nbsp;ac</div>
<div class="t" style="left:1590.3px;top:356.4px;font-size:11.5px;color:#8a8a8a;">Replace</div>
<div class="abs" style="left:1572.0px;top:377.0px;width:13.0px;height:13.0px;border:1px dashed #8090a8"></div>
<div class="abs" style="left:1575.0px;top:380.0px;width:7.0px;height:7.0px;background:#d8e0ec"></div>
<div class="t" style="left:1590.3px;top:378.2px;font-size:11.5px;color:#8a8a8a;">Select all</div>
<div class="abs" style="left:908.0px;top:416.7px;width:783.0px;height:28.7px;background:#c7d1de"></div>
<div class="abs" style="left:908.0px;top:422.0px;width:783.0px;height:15.0px;background:#fff"></div>
<svg style="left:908px;top:422px;overflow:hidden" width="783" height="15" viewBox="0 0 783 15"><text x="-10.4" y="12" font-size="11" text-anchor="middle" fill="#333" font-family="Liberation Sans">3</text><rect x="-0.9" y="6" width="1.2" height="1.2" fill="#555"/><rect x="8.5" y="4" width="1" height="5" fill="#555"/><rect x="18.0" y="6" width="1.2" height="1.2" fill="#555"/><text x="27.4" y="12" font-size="11" text-anchor="middle" fill="#333" font-family="Liberation Sans">2</text><rect x="36.9" y="6" width="1.2" height="1.2" fill="#555"/><rect x="46.3" y="4" width="1" height="5" fill="#555"/><rect x="55.8" y="6" width="1.2" height="1.2" fill="#555"/><text x="65.2" y="12" font-size="11" text-anchor="middle" fill="#333" font-family="Liberation Sans">1</text><rect x="74.7" y="6" width="1.2" height="1.2" fill="#555"/><rect x="84.1" y="4" width="1" height="5" fill="#555"/><rect x="93.6" y="6" width="1.2" height="1.2" fill="#555"/><rect x="112.5" y="6" width="1.2" height="1.2" fill="#555"/><rect x="121.9" y="4" width="1" height="5" fill="#555"/><rect x="131.3" y="6" width="1.2" height="1.2" fill="#555"/><text x="140.8" y="12" font-size="11" text-anchor="middle" fill="#333" font-family="Liberation Sans">1</text><rect x="150.2" y="6" width="1.2" height="1.2" fill="#555"/><rect x="159.7" y="4" width="1" height="5" fill="#555"/><rect x="169.1" y="6" width="1.2" height="1.2" fill="#555"/><text x="178.6" y="12" font-size="11" text-anchor="middle" fill="#333" font-family="Liberation Sans">2</text><rect x="188.0" y="6" width="1.2" height="1.2" fill="#555"/><rect x="197.5" y="4" width="1" height="5" fill="#555"/><rect x="206.9" y="6" width="1.2" height="1.2" fill="#555"/><text x="216.4" y="12" font-size="11" text-anchor="middle" fill="#333" font-family="Liberation Sans">3</text><rect x="225.9" y="6" width="1.2" height="1.2" fill="#555"/><rect x="235.3" y="4" width="1" height="5" fill="#555"/><rect x="244.8" y="6" width="1.2" height="1.2" fill="#555"/><text x="254.2" y="12" font-size="11" text-anchor="middle" fill="#333" font-family="Liberation Sans">4</text><rect x="263.7" y="6" width="1.2" height="1.2" fill="#555"/><rect x="273.1" y="4" width="1" height="5" fill="#555"/><rect x="282.5" y="6" width="1.2" height="1.2" fill="#555"/><text x="292.0" y="12" font-size="11" text-anchor="middle" fill="#333" font-family="Liberation Sans">5</text><rect x="301.5" y="6" width="1.2" height="1.2" fill="#555"/><rect x="310.9" y="4" width="1" height="5" fill="#555"/><rect x="320.3" y="6" width="1.2" height="1.2" fill="#555"/><text x="329.8" y="12" font-size="11" text-anchor="middle" fill="#333" font-family="Liberation Sans">6</text><rect x="339.2" y="6" width="1.2" height="1.2" fill="#555"/><rect x="348.7" y="4" width="1" height="5" fill="#555"/><rect x="358.1" y="6" width="1.2" height="1.2" fill="#555"/><text x="367.6" y="12" font-size="11" text-anchor="middle" fill="#333" font-family="Liberation Sans">7</text><rect x="377.0" y="6" width="1.2" height="1.2" fill="#555"/><rect x="386.5" y="4" width="1" height="5" fill="#555"/><rect x="395.9" y="6" width="1.2" height="1.2" fill="#555"/><text x="405.4" y="12" font-size="11" text-anchor="middle" fill="#333" font-family="Liberation Sans">8</text><rect x="414.9" y="6" width="1.2" height="1.2" fill="#555"/><rect x="424.3" y="4" width="1" height="5" fill="#555"/><rect x="433.8" y="6" width="1.2" height="1.2" fill="#555"/><text x="443.2" y="12" font-size="11" text-anchor="middle" fill="#333" font-family="Liberation Sans">9</text><rect x="452.7" y="6" width="1.2" height="1.2" fill="#555"/><rect x="462.1" y="4" width="1" height="5" fill="#555"/><rect x="471.5" y="6" width="1.2" height="1.2" fill="#555"/><text x="481.0" y="12" font-size="11" text-anchor="middle" fill="#333" font-family="Liberation Sans">10</text><rect x="490.5" y="6" width="1.2" height="1.2" fill="#555"/><rect x="499.9" y="4" width="1" height="5" fill="#555"/><rect x="509.3" y="6" width="1.2" height="1.2" fill="#555"/><text x="518.8" y="12" font-size="11" text-anchor="middle" fill="#333" font-family="Liberation Sans">11</text><rect x="528.2" y="6" width="1.2" height="1.2" fill="#555"/><rect x="537.7" y="4" width="1" height="5" fill="#555"/><rect x="547.1" y="6" width="1.2" height="1.2" fill="#555"/><text x="556.6" y="12" font-size="11" text-anchor="middle" fill="#333" font-family="Liberation Sans">12</text><rect x="566.0" y="6" width="1.2" height="1.2" fill="#555"/><rect x="575.5" y="4" width="1" height="5" fill="#555"/><rect x="584.9" y="6" width="1.2" height="1.2" fill="#555"/><text x="594.4" y="12" font-size="11" text-anchor="middle" fill="#333" font-family="Liberation Sans">13</text><rect x="603.9" y="6" width="1.2" height="1.2" fill="#555"/><rect x="613.3" y="4" width="1" height="5" fill="#555"/><rect x="622.8" y="6" width="1.2" height="1.2" fill="#555"/><text x="632.2" y="12" font-size="11" text-anchor="middle" fill="#333" font-family="Liberation Sans">14</text><rect x="641.6" y="6" width="1.2" height="1.2" fill="#555"/><rect x="651.1" y="4" width="1" height="5" fill="#555"/><rect x="660.5" y="6" width="1.2" height="1.2" fill="#555"/><text x="670.0" y="12" font-size="11" text-anchor="middle" fill="#333" font-family="Liberation Sans">15</text><rect x="679.5" y="6" width="1.2" height="1.2" fill="#555"/><rect x="688.9" y="4" width="1" height="5" fill="#555"/><rect x="698.3" y="6" width="1.2" height="1.2" fill="#555"/><text x="707.8" y="12" font-size="11" text-anchor="middle" fill="#333" font-family="Liberation Sans">16</text><rect x="717.2" y="6" width="1.2" height="1.2" fill="#555"/><rect x="726.7" y="4" width="1" height="5" fill="#555"/><rect x="736.1" y="6" width="1.2" height="1.2" fill="#555"/><text x="745.6" y="12" font-size="11" text-anchor="middle" fill="#333" font-family="Liberation Sans">17</text><rect x="755.0" y="6" width="1.2" height="1.2" fill="#555"/><rect x="764.5" y="4" width="1" height="5" fill="#555"/><rect x="773.9" y="6" width="1.2" height="1.2" fill="#555"/><text x="783.4" y="12" font-size="11" text-anchor="middle" fill="#333" font-family="Liberation Sans">18</text><rect x="792.9" y="6" width="1.2" height="1.2" fill="#555"/><rect x="802.3" y="4" width="1" height="5" fill="#555"/><rect x="811.8" y="6" width="1.2" height="1.2" fill="#555"/></svg>
<svg style="left:1005px;top:420px;" width="12" height="23" viewBox="0 0 12 23"><path d="M1 1H11L6 8Z M1 15L6 8L11 15Z" fill="#fff" stroke="#4a5a78"/><rect x="1" y="15" width="10" height="7" fill="#fff" stroke="#4a5a78"/></svg>
<svg style="left:1581px;top:428px;" width="12" height="9" viewBox="0 0 12 9"><path d="M1 8L6 1L11 8Z" fill="#fff" stroke="#4a5a78"/></svg>
<div class="abs" style="left:908.0px;top:701.4px;width:783.0px;height:25.6px;background:#f0f0f0;border-top:1px solid #d9d9d9;border-radius:0 0 8px 8px"></div>
<div class="abs" style="left:1443.4px;top:703.0px;width:1.0px;height:23.0px;background:#dadada"></div>
<div class="abs" style="left:1474.6px;top:703.0px;width:1.0px;height:23.0px;background:#dadada"></div>
<div class="t" style="left:1496.0px;top:708.9px;font-size:11.5px;color:#222;">100%</div>
<svg style="left:1531px;top:707px;" width="15" height="15" viewBox="0 0 15 15"><circle cx="7.5" cy="7.5" r="6.8" fill="#fafafa" stroke="#555"/><path d="M4 7.5H11" stroke="#222" stroke-width="1.8"/></svg>
<div class="abs" style="left:1556.8px;top:712.5px;width:84.8px;height:4.0px;background:#e0e4e8;border:1px solid #c8ccd0"></div>
<svg style="left:1594px;top:705px;" width="12" height="18" viewBox="0 0 12 18"><path d="M0 0H12V12L6 18L0 12Z" fill="#1e78d8"/></svg>
<svg style="left:1653px;top:707px;" width="15" height="15" viewBox="0 0 15 15"><circle cx="7.5" cy="7.5" r="6.8" fill="#fafafa" stroke="#555"/><path d="M4 7.5H11M7.5 4V11" stroke="#222" stroke-width="1.8"/></svg>
<svg style="left:1680px;top:717px;" width="8" height="8" viewBox="0 0 8 8"><g fill="#aaa"><rect x="6" y="0" width="1.5" height="1.5"/><rect x="3" y="3" width="1.5" height="1.5"/><rect x="6" y="3" width="1.5" height="1.5"/><rect x="0" y="6" width="1.5" height="1.5"/><rect x="3" y="6" width="1.5" height="1.5"/><rect x="6" y="6" width="1.5" height="1.5"/></g></svg>
<div class="abs" style="left:526.0px;top:536.0px;width:412.5px;height:365.5px;background:#f0f0f0;border-radius:8px;box-shadow:0 0 0 1px rgba(0,0,0,.14),0 3px 12px rgba(0,0,0,.22);"></div>
<div class="abs" style="left:526.0px;top:536.0px;width:412.5px;height:30.0px;background:#fff;border-radius:8px 8px 0 0"></div>
<svg style="left:534px;top:542px;" width="16" height="16" viewBox="0 0 16 16"><rect x="1" y="1" width="14" height="14" fill="#c8c8c8" stroke="#333"/><rect x="3" y="5" width="10" height="9" fill="#6a9a6a"/><rect x="1" y="1" width="14" height="3" fill="#8a8a8a"/><circle cx="7" cy="10" r="3" fill="#ddd"/></svg>
<div class="t" style="left:555.0px;top:545.4px;font-size:11.2px;color:#9a9a9a;">Windows Features</div>
<div class="t" style="left:538.7px;top:579.6px;font-size:15.8px;color:#1e3c9a;">Turn Windows features on or off</div>
<div class="t" style="left:538.7px;top:609.1px;font-size:11.7px;color:#000;">To turn a feature on, select its check box. To turn a feature off, clear its</div>
<div class="t" style="left:538.7px;top:624.1px;font-size:11.7px;color:#000;">check box. A filled box means that only part of the feature is turned on.</div>
<div class="abs" style="left:536.3px;top:647.5px;width:392.5px;height:210.8px;background:#fff;border:1px solid #828790"></div>
<div class="abs" style="left:912.0px;top:648.5px;width:16.0px;height:208.8px;background:#f0f0f0"></div>
<div class="abs" style="left:537px;top:648px;width:375px;height:209px;overflow:hidden">
<svg style="left:7px;top:4.2px" width="9" height="9"><rect x="0.5" y="0.5" width="8" height="8" fill="#fff" stroke="#9a9a9a"/><path d="M2 4.5H7M4.5 2V7" stroke="#333"/></svg>
<div class="abs" style="left:22px;top:2.2px;width:13px;height:13px;background:#0a62c8;border-radius:2px"></div>
<div class="abs" style="left:25px;top:8.2px;width:7px;height:1.2px;background:#fff"></div>
<svg style="left:35px;top:1.7px" width="17" height="14"><path d="M0 1.5 Q0 0 1.5 0 H6 L8 2 H15.5 Q17 2 17 3.5 V12.5 Q17 14 15.5 14 H1.5 Q0 14 0 12.5Z" fill="#f0b828"/><path d="M0 4 H17 V12.5 Q17 14 15.5 14 H1.5 Q0 14 0 12.5Z" fill="#ffd660"/></svg>
<div class="t" style="left:56.3px;top:2.9px;font-size:11.7px;color:#000;">.NET Framework 3.5 (includes .NET 2.0 and 3.0)</div>
<svg style="left:7px;top:22.2px" width="9" height="9"><rect x="0.5" y="0.5" width="8" height="8" fill="#fff" stroke="#9a9a9a"/><path d="M2 4.5H7M4.5 2V7" stroke="#333"/></svg>
<div class="abs" style="left:22px;top:20.2px;width:13px;height:13px;background:#0a62c8;border-radius:2px"></div>
<div class="abs" style="left:25px;top:26.2px;width:7px;height:1.2px;background:#fff"></div>
<svg style="left:35px;top:19.7px" width="17" height="14"><path d="M0 1.5 Q0 0 1.5 0 H6 L8 2 H15.5 Q17 2 17 3.5 V12.5 Q17 14 15.5 14 H1.5 Q0 14 0 12.5Z" fill="#f0b828"/><path d="M0 4 H17 V12.5 Q17 14 15.5 14 H1.5 Q0 14 0 12.5Z" fill="#ffd660"/></svg>
<div class="t" style="left:56.3px;top:20.9px;font-size:11.7px;color:#000;">.NET Framework 4.8 Advanced Services</div>
<svg style="left:7px;top:40.2px" width="9" height="9"><rect x="0.5" y="0.5" width="8" height="8" fill="#fff" stroke="#9a9a9a"/><path d="M2 4.5H7M4.5 2V7" stroke="#333"/></svg>
<div class="abs" style="left:22px;top:38.2px;width:13px;height:13px;background:#f4f4f4;border:1px solid #8a8a8a;border-radius:2px"></div>
<svg style="left:35px;top:37.7px" width="17" height="14"><path d="M0 1.5 Q0 0 1.5 0 H6 L8 2 H15.5 Q17 2 17 3.5 V12.5 Q17 14 15.5 14 H1.5 Q0 14 0 12.5Z" fill="#f0b828"/><path d="M0 4 H17 V12.5 Q17 14 15.5 14 H1.5 Q0 14 0 12.5Z" fill="#ffd660"/></svg>
<div class="t" style="left:56.3px;top:38.9px;font-size:11.7px;color:#000;">Internet Information Services</div>
<div class="abs" style="left:22px;top:56.2px;width:13px;height:13px;background:#f4f4f4;border:1px solid #8a8a8a;border-radius:2px"></div>
<svg style="left:35px;top:55.7px" width="17" height="14"><path d="M0 1.5 Q0 0 1.5 0 H6 L8 2 H15.5 Q17 2 17 3.5 V12.5 Q17 14 15.5 14 H1.5 Q0 14 0 12.5Z" fill="#f0b828"/><path d="M0 4 H17 V12.5 Q17 14 15.5 14 H1.5 Q0 14 0 12.5Z" fill="#ffd660"/></svg>
<div class="t" style="left:56.3px;top:56.9px;font-size:11.7px;color:#000;">Internet Information Services Hostable Web Core</div>
<svg style="left:7px;top:76.2px" width="9" height="9"><rect x="0.5" y="0.5" width="8" height="8" fill="#fff" stroke="#9a9a9a"/><path d="M2 4.5H7M4.5 2V7" stroke="#333"/></svg>
<div class="abs" style="left:22px;top:74.2px;width:13px;height:13px;background:#f4f4f4;border:1px solid #8a8a8a;border-radius:2px"></div>
<svg style="left:35px;top:73.7px" width="17" height="14"><path d="M0 1.5 Q0 0 1.5 0 H6 L8 2 H15.5 Q17 2 17 3.5 V12.5 Q17 14 15.5 14 H1.5 Q0 14 0 12.5Z" fill="#f0b828"/><path d="M0 4 H17 V12.5 Q17 14 15.5 14 H1.5 Q0 14 0 12.5Z" fill="#ffd660"/></svg>
<div class="t" style="left:56.3px;top:74.9px;font-size:11.7px;color:#000;">Legacy Components</div>
<svg style="left:7px;top:94.2px" width="9" height="9"><rect x="0.5" y="0.5" width="8" height="8" fill="#fff" stroke="#9a9a9a"/><path d="M2 4.5H7M4.5 2V7" stroke="#333"/></svg>
<div class="abs" style="left:22px;top:92.2px;width:13px;height:13px;background:#0a62c8;border-radius:2px"></div>
<svg style="left:24px;top:94.2px" width="9" height="9"><path d="M1 4.5 L3.5 7 L8 1.8" fill="none" stroke="#fff" stroke-width="1.3"/></svg>
<svg style="left:35px;top:91.7px" width="17" height="14"><path d="M0 1.5 Q0 0 1.5 0 H6 L8 2 H15.5 Q17 2 17 3.5 V12.5 Q17 14 15.5 14 H1.5 Q0 14 0 12.5Z" fill="#f0b828"/><path d="M0 4 H17 V12.5 Q17 14 15.5 14 H1.5 Q0 14 0 12.5Z" fill="#ffd660"/></svg>
<div class="t" style="left:56.3px;top:92.9px;font-size:11.7px;color:#000;">Media Features</div>
<svg style="left:7px;top:112.2px" width="9" height="9"><rect x="0.5" y="0.5" width="8" height="8" fill="#fff" stroke="#9a9a9a"/><path d="M2 4.5H7M4.5 2V7" stroke="#333"/></svg>
<div class="abs" style="left:22px;top:110.2px;width:13px;height:13px;background:#f4f4f4;border:1px solid #8a8a8a;border-radius:2px"></div>
<svg style="left:35px;top:109.7px" width="17" height="14"><path d="M0 1.5 Q0 0 1.5 0 H6 L8 2 H15.5 Q17 2 17 3.5 V12.5 Q17 14 15.5 14 H1.5 Q0 14 0 12.5Z" fill="#f0b828"/><path d="M0 4 H17 V12.5 Q17 14 15.5 14 H1.5 Q0 14 0 12.5Z" fill="#ffd660"/></svg>
<div class="t" style="left:56.3px;top:110.9px;font-size:11.7px;color:#000;">Microsoft Message Queue (MSMQ) Server</div>
<div class="abs" style="left:22px;top:128.2px;width:13px;height:13px;background:#0a62c8;border-radius:2px"></div>
<svg style="left:24px;top:130.2px" width="9" height="9"><path d="M1 4.5 L3.5 7 L8 1.8" fill="none" stroke="#fff" stroke-width="1.3"/></svg>
<svg style="left:35px;top:127.7px" width="17" height="14"><path d="M0 1.5 Q0 0 1.5 0 H6 L8 2 H15.5 Q17 2 17 3.5 V12.5 Q17 14 15.5 14 H1.5 Q0 14 0 12.5Z" fill="#f0b828"/><path d="M0 4 H17 V12.5 Q17 14 15.5 14 H1.5 Q0 14 0 12.5Z" fill="#ffd660"/></svg>
<div class="t" style="left:56.3px;top:128.9px;font-size:11.7px;color:#000;">Microsoft Print to PDF</div>
<div class="abs" style="left:22px;top:146.2px;width:13px;height:13px;background:#0a62c8;border-radius:2px"></div>
<svg style="left:24px;top:148.2px" width="9" height="9"><path d="M1 4.5 L3.5 7 L8 1.8" fill="none" stroke="#fff" stroke-width="1.3"/></svg>
<svg style="left:35px;top:145.7px" width="17" height="14"><path d="M0 1.5 Q0 0 1.5 0 H6 L8 2 H15.5 Q17 2 17 3.5 V12.5 Q17 14 15.5 14 H1.5 Q0 14 0 12.5Z" fill="#f0b828"/><path d="M0 4 H17 V12.5 Q17 14 15.5 14 H1.5 Q0 14 0 12.5Z" fill="#ffd660"/></svg>
<div class="t" style="left:56.3px;top:146.9px;font-size:11.7px;color:#000;">Microsoft XPS Document Writer</div>
<svg style="left:7px;top:166.2px" width="9" height="9"><rect x="0.5" y="0.5" width="8" height="8" fill="#fff" stroke="#9a9a9a"/><path d="M2 4.5H7M4.5 2V7" stroke="#333"/></svg>
<div class="abs" style="left:22px;top:164.2px;width:13px;height:13px;background:#0a62c8;border-radius:2px"></div>
<div class="abs" style="left:25px;top:170.2px;width:7px;height:1.2px;background:#fff"></div>
<svg style="left:35px;top:163.7px" width="17" height="14"><path d="M0 1.5 Q0 0 1.5 0 H6 L8 2 H15.5 Q17 2 17 3.5 V12.5 Q17 14 15.5 14 H1.5 Q0 14 0 12.5Z" fill="#f0b828"/><path d="M0 4 H17 V12.5 Q17 14 15.5 14 H1.5 Q0 14 0 12.5Z" fill="#ffd660"/></svg>
<div class="t" style="left:56.3px;top:164.9px;font-size:11.7px;color:#000;">Print and Document Services</div>
<div class="abs" style="left:22px;top:182.2px;width:13px;height:13px;background:#0a62c8;border-radius:2px"></div>
<svg style="left:24px;top:184.2px" width="9" height="9"><path d="M1 4.5 L3.5 7 L8 1.8" fill="none" stroke="#fff" stroke-width="1.3"/></svg>
<svg style="left:35px;top:181.7px" width="17" height="14"><path d="M0 1.5 Q0 0 1.5 0 H6 L8 2 H15.5 Q17 2 17 3.5 V12.5 Q17 14 15.5 14 H1.5 Q0 14 0 12.5Z" fill="#f0b828"/><path d="M0 4 H17 V12.5 Q17 14 15.5 14 H1.5 Q0 14 0 12.5Z" fill="#ffd660"/></svg>
<div class="t" style="left:56.3px;top:182.9px;font-size:11.7px;color:#000;">Remote Differential Compression API Support</div>
<div class="abs" style="left:22px;top:200.2px;width:13px;height:13px;background:#f4f4f4;border:1px solid #8a8a8a;border-radius:2px"></div>
<svg style="left:35px;top:199.7px" width="17" height="14"><path d="M0 1.5 Q0 0 1.5 0 H6 L8 2 H15.5 Q17 2 17 3.5 V12.5 Q17 14 15.5 14 H1.5 Q0 14 0 12.5Z" fill="#f0b828"/><path d="M0 4 H17 V12.5 Q17 14 15.5 14 H1.5 Q0 14 0 12.5Z" fill="#ffd660"/></svg>
<div class="t" style="left:56.3px;top:200.9px;font-size:11.7px;color:#000;">Simple TCPIP services (i.e. echo, daytime etc)</div>
</div>
<div class="btn" style="left:771.9px;top:868.3px;width:72.4px;height:22.3px;border:1px solid #0a64c8"></div>
<div class="t" style="left:508.0px;width:600px;text-align:center;top:873.6px;font-size:11.7px;color:#000;">OK</div>
<div class="btn" style="left:855.3px;top:868.3px;width:72.1px;height:22.3px"></div>
<div class="t" style="left:591.3px;width:600px;text-align:center;top:873.6px;font-size:11.7px;color:#000;">Cancel</div>
<div class="abs" style="left:943.0px;top:727.0px;width:779.0px;height:330.0px;background:#fff;border-radius:8px 8px 0 0;box-shadow:0 0 0 1px rgba(0,0,0,.14),0 3px 12px rgba(0,0,0,.22)"></div>
<div class="t" style="left:978.0px;top:735.9px;font-size:11.2px;color:#9a9a9a;">Device Manager</div>
<svg style="left:1602.5px;top:740.7px" width="11" height="1"><rect width="11" height="1" fill="#555"/></svg>
<svg style="left:1647.3px;top:735.7px" width="11" height="11"><rect x="0.5" y="0.5" width="10" height="10" rx="1" fill="none" stroke="#555" stroke-width="1"/></svg>
<svg style="left:1693.3px;top:735.7px" width="11" height="11"><path d="M0 0L11 11M11 0L0 11" stroke="#555" stroke-width="1"/></svg>
<div class="t" style="left:955.0px;top:762.1px;font-size:11.7px;color:#000;">File</div>
<div class="t" style="left:983.0px;top:762.1px;font-size:11.7px;color:#000;">Action</div>
<div class="t" style="left:1036.0px;top:762.1px;font-size:11.7px;color:#000;">View</div>
<div class="t" style="left:1079.0px;top:762.1px;font-size:11.7px;color:#000;">Help</div>
<div class="abs" style="left:943.0px;top:779.0px;width:779.0px;height:1.0px;background:#d0d0d0"></div>
<div class="abs" style="left:943.0px;top:780.0px;width:779.0px;height:30.0px;background:linear-gradient(#fff 0,#fff 72%,#eeeeee 100%)"></div>
<div class="abs" style="left:943.0px;top:808.5px;width:779.0px;height:1.8px;background:#6a6a6a"></div>
<svg style="left:947px;top:786px;" width="12" height="14" viewBox="0 0 12 14"><path d="M10 1L2 7L10 13Z" fill="none" stroke="#aaa"/></svg>
<svg style="left:975px;top:786px;" width="12" height="14" viewBox="0 0 12 14"><path d="M2 1L10 7L2 13Z" fill="none" stroke="#aaa"/></svg>
<div class="abs" style="left:993.0px;top:784.0px;width:1.0px;height:20.0px;background:#aaa"></div>
<svg style="left:1001px;top:786px;" width="16" height="14" viewBox="0 0 16 14"><rect x="0.5" y="0.5" width="15" height="13" fill="#fff" stroke="#888"/><path d="M3 7H8M10 4V10" stroke="#30a030" stroke-width="2"/></svg>
<div class="abs" style="left:1024.6px;top:784.0px;width:1.0px;height:20.0px;background:#aaa"></div>
<svg style="left:1032px;top:786px;" width="16" height="14" viewBox="0 0 16 14"><rect x="0" y="0" width="16" height="14" fill="#2a4aa8"/><rect x="6" y="4" width="4" height="6" fill="#fff"/></svg>
<svg style="left:1057px;top:785px;" width="16" height="16" viewBox="0 0 16 16"><rect x="0.5" y="0.5" width="15" height="15" fill="#fafafa" stroke="#888"/><path d="M0.5 4H15.5" stroke="#888"/><path d="M3 7L7 10L3 13Z" fill="#30a030"/><path d="M11 7V14M13 7V14" stroke="#4a80c8"/></svg>
<div class="abs" style="left:1078.6px;top:784.0px;width:1.0px;height:20.0px;background:#888"></div>
<svg style="left:1086px;top:784px;" width="17" height="18" viewBox="0 0 17 18"><circle cx="6" cy="10" r="4.5" fill="#ddd" stroke="#888" stroke-width="1.5" stroke-dasharray="2 1.2"/><rect x="5" y="0.5" width="9" height="10" fill="#fff" stroke="#bbb"/><path d="M13 8L9 12H11.5V17H14.5V12H17Z" fill="#30b030"/></svg>
<div class="abs" style="left:1109.5px;top:784.0px;width:1.0px;height:20.0px;background:#888"></div>
<svg style="left:1118px;top:785px;" width="17" height="17" viewBox="0 0 17 17"><rect x="0.5" y="0.5" width="16" height="12" fill="#4aa0e8" stroke="#2a70b8"/><circle cx="10" cy="6" r="4.5" fill="#cde8fa" stroke="#4a6a88"/><path d="M7 9L1 16" stroke="#555" stroke-width="1.5"/><path d="M3 15.5H16" stroke="#888"/></svg>
<div class="abs" style="left:944.4px;top:810.3px;width:777.0px;height:240.0px;background:#fff;border-left:1px solid #aaa"></div>
<svg style="left:951px;top:816px;" width="10" height="7" viewBox="0 0 10 7"><path d="M0.8 0.8L5 5L9.2 0.8" fill="none" stroke="#333" stroke-width="1.3"/></svg>
<svg style="left:968px;top:812px;" width="14" height="15" viewBox="0 0 14 15"><rect x="5" y="0" width="4" height="7" fill="#222"/><rect x="6" y="2" width="1.5" height="1.5" fill="#3c3"/><rect x="0.5" y="7.5" width="13" height="7" fill="#e8e8e8" stroke="#777"/><rect x="3" y="10" width="2" height="3" fill="#333"/><rect x="9" y="10" width="2" height="3" fill="#333"/></svg>
<div class="t" style="left:987.5px;top:813.9px;font-size:11.7px;color:#000;">Jamie</div>
<svg style="left:971px;top:833px;" width="6" height="9" viewBox="0 0 6 9"><path d="M0.8 0.8L4.5 4.5L0.8 8.2" fill="none" stroke="#666" stroke-width="1.1"/></svg>
<svg style="left:986px;top:829px;" width="16" height="16" viewBox="0 0 16 16"><path d="M3 5H6L11 1V15L6 11H3Z" fill="#c8c8c8" stroke="#666"/><path d="M12 5Q14 8 12 11" fill="none" stroke="#888"/></svg>
<div class="t" style="left:1007.2px;top:832.0px;font-size:11.7px;color:#000;">Audio inputs and outputs</div>
<svg style="left:971px;top:851px;" width="6" height="9" viewBox="0 0 6 9"><path d="M0.8 0.8L4.5 4.5L0.8 8.2" fill="none" stroke="#666" stroke-width="1.1"/></svg>
<svg style="left:986px;top:847px;" width="16" height="16" viewBox="0 0 16 16"><rect x="2" y="6" width="11" height="9" rx="3" fill="#40b040" stroke="#555"/><path d="M0 2Q8 -2 15 5" stroke="#333" fill="none"/><rect x="0" y="11" width="5" height="2" fill="#e0c030"/></svg>
<div class="t" style="left:1007.2px;top:850.0px;font-size:11.7px;color:#000;">Batteries</div>
<svg style="left:971px;top:869px;" width="6" height="9" viewBox="0 0 6 9"><path d="M0.8 0.8L4.5 4.5L0.8 8.2" fill="none" stroke="#666" stroke-width="1.1"/></svg>
<svg style="left:986px;top:865px;" width="16" height="16" viewBox="0 0 16 16"><rect x="2" y="0" width="12" height="16" rx="6" fill="#1a78e0"/><path d="M5 5L11 11L8 14V2L11 5L5 11" fill="none" stroke="#fff" stroke-width="1.3"/></svg>
<div class="t" style="left:1007.2px;top:868.0px;font-size:11.7px;color:#000;">Bluetooth</div>
<svg style="left:971px;top:887px;" width="6" height="9" viewBox="0 0 6 9"><path d="M0.8 0.8L4.5 4.5L0.8 8.2" fill="none" stroke="#666" stroke-width="1.1"/></svg>
<svg style="left:986px;top:883px;" width="16" height="16" viewBox="0 0 16 16"><circle cx="8" cy="7" r="6.5" fill="#d8d8d8" stroke="#555"/><circle cx="8" cy="7" r="3" fill="#333"/><path d="M5 14H11V16H5Z" fill="#333"/></svg>
<div class="t" style="left:1007.2px;top:886.0px;font-size:11.7px;color:#000;">Cameras</div>
<svg style="left:971px;top:905px;" width="6" height="9" viewBox="0 0 6 9"><path d="M0.8 0.8L4.5 4.5L0.8 8.2" fill="none" stroke="#666" stroke-width="1.1"/></svg>
<svg style="left:986px;top:901px;" width="16" height="16" viewBox="0 0 16 16"><rect x="0.5" y="0.5" width="15" height="11" fill="#3aaaf0" stroke="#2a6aa8"/><rect x="3" y="13" width="10" height="2" fill="#aaa"/></svg>
<div class="t" style="left:1007.2px;top:904.0px;font-size:11.7px;color:#000;">Computer</div>
<svg style="left:971px;top:923px;" width="6" height="9" viewBox="0 0 6 9"><path d="M0.8 0.8L4.5 4.5L0.8 8.2" fill="none" stroke="#666" stroke-width="1.1"/></svg>
<svg style="left:986px;top:919px;" width="16" height="16" viewBox="0 0 16 16"><rect x="1" y="8" width="14" height="6" rx="1" fill="#d0d0d0" stroke="#555"/><rect x="1" y="11" width="14" height="3" fill="#333"/><rect x="11" y="9.5" width="2" height="1" fill="#3c3"/></svg>
<div class="t" style="left:1007.2px;top:922.0px;font-size:11.7px;color:#000;">Disk drives</div>
<svg style="left:971px;top:941px;" width="6" height="9" viewBox="0 0 6 9"><path d="M0.8 0.8L4.5 4.5L0.8 8.2" fill="none" stroke="#666" stroke-width="1.1"/></svg>
<svg style="left:986px;top:937px;" width="16" height="16" viewBox="0 0 16 16"><rect x="0.5" y="0.5" width="15" height="11" fill="#3aaaf0" stroke="#2a6aa8"/><rect x="6" y="8" width="10" height="7" fill="#30a040" stroke="#555"/></svg>
<div class="t" style="left:1007.2px;top:940.0px;font-size:11.7px;color:#000;">Display adapters</div>
<svg style="left:971px;top:959px;" width="6" height="9" viewBox="0 0 6 9"><path d="M0.8 0.8L4.5 4.5L0.8 8.2" fill="none" stroke="#666" stroke-width="1.1"/></svg>
<svg style="left:986px;top:955px;" width="16" height="16" viewBox="0 0 16 16"><rect x="2" y="0.5" width="12" height="15" fill="#444" stroke="#222"/><rect x="4" y="2" width="8" height="12" fill="#ddd"/></svg>
<div class="t" style="left:1007.2px;top:958.0px;font-size:11.7px;color:#000;">Firmware</div>
<svg style="left:971px;top:977px;" width="6" height="9" viewBox="0 0 6 9"><path d="M0.8 0.8L4.5 4.5L0.8 8.2" fill="none" stroke="#666" stroke-width="1.1"/></svg>
<svg style="left:986px;top:973px;" width="16" height="16" viewBox="0 0 16 16"><rect x="0.5" y="2" width="15" height="7" fill="#e0e0e0" stroke="#666"/><path d="M2 4H14M2 6H14" stroke="#999" stroke-dasharray="1 1"/><path d="M1 15Q3 9 7 11Q9 9 14 15" fill="#555"/></svg>
<div class="t" style="left:1007.2px;top:976.0px;font-size:11.7px;color:#000;">Human Interface Devices</div>
<svg style="left:971px;top:995px;" width="6" height="9" viewBox="0 0 6 9"><path d="M0.8 0.8L4.5 4.5L0.8 8.2" fill="none" stroke="#666" stroke-width="1.1"/></svg>
<svg style="left:986px;top:991px;" width="16" height="16" viewBox="0 0 16 16"><rect x="0.5" y="3" width="15" height="10" fill="#e8e8e8" stroke="#666"/><path d="M2 6H14M2 8.5H14M4 11H12" stroke="#888" stroke-dasharray="1 1"/></svg>
<div class="t" style="left:1007.2px;top:994.0px;font-size:11.7px;color:#000;">Keyboards</div>
<svg style="left:971px;top:1013px;" width="6" height="9" viewBox="0 0 6 9"><path d="M0.8 0.8L4.5 4.5L0.8 8.2" fill="none" stroke="#666" stroke-width="1.1"/></svg>
<svg style="left:986px;top:1009px;" width="16" height="16" viewBox="0 0 16 16"><rect x="3" y="0.5" width="10" height="15" rx="5" fill="#d8d8d8" stroke="#444"/><path d="M8 1V6" stroke="#444"/></svg>
<div class="t" style="left:1007.2px;top:1012.0px;font-size:11.7px;color:#000;">Mice and other pointing devices</div>
<svg style="left:971px;top:1031px;" width="6" height="9" viewBox="0 0 6 9"><path d="M0.8 0.8L4.5 4.5L0.8 8.2" fill="none" stroke="#666" stroke-width="1.1"/></svg>
<svg style="left:986px;top:1027px;" width="16" height="16" viewBox="0 0 16 16"><rect x="0.5" y="0.5" width="15" height="11" fill="#3aaaf0" stroke="#2a6aa8"/></svg>
<div class="t" style="left:1007.2px;top:1030.1px;font-size:11.7px;color:#000;">Monitors</div>
<div class="abs" style="left:1774.0px;top:546.0px;width:678.0px;height:467.0px;background:#fff;border-radius:8px;box-shadow:0 0 0 1px rgba(0,0,0,.14),0 3px 12px rgba(0,0,0,.22);"></div>
<svg style="left:1782px;top:553px;" width="16" height="14" viewBox="0 0 16 14"><rect x="0.5" y="0.5" width="15" height="13" fill="#fafcff" stroke="#7a8a9a"/><path d="M1 12 L1 9 L3 6 L5 3 L7 9 L9 7 L11 9 L13 5 L15 8 L15 13 L1 13Z" fill="#9ad4f4"/><path d="M1 9 L3 6 L5 3 L7 9 L9 7 L11 9 L13 5 L15 8" fill="none" stroke="#1a7ad8" stroke-width="1.1"/></svg>
<div class="t" style="left:1803.3px;top:555.4px;font-size:11.2px;color:#8a8a8a;">Task Manager</div>
<svg style="left:2332.3px;top:559.5px" width="11" height="1"><rect width="11" height="1" fill="#555"/></svg>
<svg style="left:2377.2px;top:554.5px" width="11" height="11"><rect x="0.5" y="0.5" width="10" height="10" rx="1" fill="none" stroke="#555" stroke-width="1"/></svg>
<svg style="left:2423.5px;top:554.5px" width="11" height="11"><path d="M0 0L11 11M11 0L0 11" stroke="#555" stroke-width="1"/></svg>
<div class="t" style="left:1781.0px;top:580.0px;font-size:11.5px;color:#444;">File</div>
<div class="t" style="left:1813.0px;top:580.0px;font-size:11.5px;color:#444;">Options</div>
<div class="t" style="left:1868.7px;top:580.0px;font-size:11.5px;color:#444;">View</div>
<div class="abs" style="left:1774.0px;top:594.5px;width:678.0px;height:1.0px;background:#ececec"></div>
<div class="abs" style="left:1774.0px;top:620.5px;width:678.0px;height:1.0px;background:#e8e8e8"></div>
<div class="abs" style="left:1774.7px;top:598.7px;width:65.3px;height:23.0px;background:#f9f9f9;border:1px solid #e4e4e4;border-bottom:none"></div>
<div class="t" style="left:1507.3px;width:600px;text-align:center;top:603.2px;font-size:11.5px;color:#000;">Processes</div>
<div class="abs" style="left:1840.8px;top:601.0px;width:77.2px;height:20.0px;background:#f0f0f0;border:1px solid #e4e4e4;border-bottom:none"></div>
<div class="t" style="left:1579.4px;width:600px;text-align:center;top:604.5px;font-size:11.5px;color:#000;">Performance</div>
<div class="abs" style="left:1918.7px;top:601.0px;width:72.3px;height:20.0px;background:#f0f0f0;border:1px solid #e4e4e4;border-bottom:none"></div>
<div class="t" style="left:1654.8px;width:600px;text-align:center;top:604.5px;font-size:11.5px;color:#000;">App history</div>
<div class="abs" style="left:1992.0px;top:601.0px;width:49.0px;height:20.0px;background:#f0f0f0;border:1px solid #e4e4e4;border-bottom:none"></div>
<div class="t" style="left:1716.5px;width:600px;text-align:center;top:604.5px;font-size:11.5px;color:#000;">Startup</div>
<div class="abs" style="left:2041.8px;top:601.0px;width:39.2px;height:20.0px;background:#f0f0f0;border:1px solid #e4e4e4;border-bottom:none"></div>
<div class="t" style="left:1761.4px;width:600px;text-align:center;top:604.5px;font-size:11.5px;color:#000;">Users</div>
<div class="abs" style="left:2081.5px;top:601.0px;width:46.5px;height:20.0px;background:#f0f0f0;border:1px solid #e4e4e4;border-bottom:none"></div>
<div class="t" style="left:1804.8px;width:600px;text-align:center;top:604.5px;font-size:11.5px;color:#000;">Details</div>
<div class="abs" style="left:2128.4px;top:601.0px;width:52.4px;height:20.0px;background:#f0f0f0;border:1px solid #e4e4e4;border-bottom:none"></div>
<div class="t" style="left:1854.6px;width:600px;text-align:center;top:604.5px;font-size:11.5px;color:#000;">Services</div>
<div class="t" style="left:1781.0px;top:660.1px;font-size:11.7px;color:#4a5a78;">Name</div>
<div class="abs" style="left:2008.5px;top:636.4px;width:1.0px;height:41.0px;background:#e0e0e0"></div>
<div class="t" style="left:2015.0px;top:660.1px;font-size:11.7px;color:#4a5a78;">Status</div>
<div class="abs" style="left:2128.5px;top:636.4px;width:1.0px;height:41.0px;background:#e0e0e0"></div>
<div class="abs" style="left:2201.3px;top:636.4px;width:1.0px;height:41.0px;background:#e0e0e0"></div>
<div class="abs" style="left:2274.5px;top:636.4px;width:1.0px;height:41.0px;background:#e0e0e0"></div>
<div class="abs" style="left:2347.5px;top:636.4px;width:1.0px;height:41.0px;background:#e0e0e0"></div>
<div class="abs" style="left:2420.4px;top:636.4px;width:1.0px;height:41.0px;background:#e0e0e0"></div>
<div class="t" style="left:1594.8px;width:600px;text-align:right;top:638.5px;font-size:15px;color:#000;">5%</div>
<div class="t" style="left:1594.8px;width:600px;text-align:right;top:660.1px;font-size:11.7px;color:#4a5a78;">CPU</div>
<div class="t" style="left:1668.0px;width:600px;text-align:right;top:638.5px;font-size:15px;color:#000;">42%</div>
<div class="t" style="left:1668.0px;width:600px;text-align:right;top:660.1px;font-size:11.7px;color:#4a5a78;">Memory</div>
<div class="t" style="left:1741.0px;width:600px;text-align:right;top:638.5px;font-size:15px;color:#000;">0%</div>
<div class="t" style="left:1741.0px;width:600px;text-align:right;top:660.1px;font-size:11.7px;color:#4a5a78;">Disk</div>
<div class="t" style="left:1813.8px;width:600px;text-align:right;top:638.5px;font-size:15px;color:#000;">0%</div>
<div class="t" style="left:1813.8px;width:600px;text-align:right;top:660.1px;font-size:11.7px;color:#4a5a78;">Network</div>
<svg style="left:2210px;top:641px;" width="8" height="5" viewBox="0 0 8 5"><path d="M0.5 0.5L4 4L7.5 0.5" fill="none" stroke="#4a5a78"/></svg>
<div class="abs" style="left:2420px;top:650px;width:31px;height:30px;overflow:hidden">
<div class="t" style="left:4.0px;top:10.2px;font-size:11.7px;color:#4a5a78;">Power</div>
</div>
<div class="abs" style="left:1774.0px;top:677.0px;width:678.0px;height:1.2px;background:#a0a0a0"></div>
<div class="abs" style="left:2424.0px;top:646.0px;width:30.0px;height:1.0px;"></div>
<div class="abs" style="left:1774px;top:678px;width:678px;height:270px;overflow:hidden">
<div class="abs" style="left:354.5px;top:0.0px;width:72.8px;height:28.0px;background:#fff4c4"></div>
<div class="abs" style="left:427.3px;top:0.0px;width:73.2px;height:28.0px;background:#ffe28a"></div>
<div class="abs" style="left:500.5px;top:0.0px;width:73.0px;height:28.0px;background:#fff4c4"></div>
<div class="abs" style="left:573.5px;top:0.0px;width:72.9px;height:28.0px;background:#fff4c4"></div>
<div class="abs" style="left:646.4px;top:0.0px;width:14.5px;height:28.0px;background:#fff4c4"></div>
<div class="abs" style="left:427.3px;top:0.0px;width:1.0px;height:28.0px;background:#f0dca0"></div>
<div class="abs" style="left:500.5px;top:0.0px;width:1.0px;height:28.0px;background:#f0dca0"></div>
<div class="abs" style="left:573.5px;top:0.0px;width:1.0px;height:28.0px;background:#f0dca0"></div>
<div class="abs" style="left:646.4px;top:0.0px;width:1.0px;height:28.0px;background:#f0dca0"></div>
<svg style="left:9px;top:8px;" width="7" height="11" viewBox="0 0 7 11"><path d="M1 1L5.5 5.5L1 10" fill="none" stroke="#555" stroke-width="1.2"/></svg>
<svg style="left:29px;top:5px;" width="16" height="16" viewBox="0 0 16 16"><circle cx="8" cy="8" r="7.5" fill="#1ea8f0"/><circle cx="8" cy="8" r="5.8" fill="none" stroke="#fff" stroke-width="1"/><path d="M5 13 Q6 8 9 6 L11 4 L11 8 Q9 10 9 13Z" fill="#fff"/></svg>
<div class="t" style="left:51.0px;top:7.7px;font-size:11.7px;color:#000;">LibreWolf (9)</div>
<div class="t" style="left:-179.2px;width:600px;text-align:right;top:7.7px;font-size:11.7px;color:#000;">0%</div>
<div class="t" style="left:-106.0px;width:600px;text-align:right;top:7.7px;font-size:11.7px;color:#000;">1,083.8 MB</div>
<div class="t" style="left:-33.0px;width:600px;text-align:right;top:7.7px;font-size:11.7px;color:#000;">0 MB/s</div>
<div class="t" style="left:39.8px;width:600px;text-align:right;top:7.7px;font-size:11.7px;color:#000;">0 Mbps</div>
<div class="t" style="left:650.0px;top:7.7px;font-size:11.7px;color:#000;">Ve</div>
<div class="abs" style="left:354.5px;top:28.0px;width:72.8px;height:28.0px;background:#f9eca8"></div>
<div class="abs" style="left:427.3px;top:28.0px;width:73.2px;height:28.0px;background:#f9eca8"></div>
<div class="abs" style="left:500.5px;top:28.0px;width:73.0px;height:28.0px;background:#fff4c4"></div>
<div class="abs" style="left:573.5px;top:28.0px;width:72.9px;height:28.0px;background:#fff4c4"></div>
<div class="abs" style="left:646.4px;top:28.0px;width:14.5px;height:28.0px;background:#fff4c4"></div>
<div class="abs" style="left:427.3px;top:28.0px;width:1.0px;height:28.0px;background:#f0dca0"></div>
<div class="abs" style="left:500.5px;top:28.0px;width:1.0px;height:28.0px;background:#f0dca0"></div>
<div class="abs" style="left:573.5px;top:28.0px;width:1.0px;height:28.0px;background:#f0dca0"></div>
<div class="abs" style="left:646.4px;top:28.0px;width:1.0px;height:28.0px;background:#f0dca0"></div>
<svg style="left:29px;top:33px;" width="16" height="16" viewBox="0 0 16 16"><circle cx="8" cy="8" r="8" fill="#5865f2"/><path d="M3.5 5 Q8 3 12.5 5 Q14 9 12.5 11 Q11 12 10 11 L10.5 10.3 Q8 11 5.5 10.3 L6 11 Q5 12 3.5 11 Q2 9 3.5 5Z" fill="#fff"/><circle cx="6.2" cy="8" r="1" fill="#5865f2"/><circle cx="9.8" cy="8" r="1" fill="#5865f2"/></svg>
<div class="t" style="left:51.0px;top:35.6px;font-size:11.7px;color:#000;">Discord (32 bit)</div>
<div class="t" style="left:-179.2px;width:600px;text-align:right;top:35.6px;font-size:11.7px;color:#000;">0.4%</div>
<div class="t" style="left:-106.0px;width:600px;text-align:right;top:35.6px;font-size:11.7px;color:#000;">118.3 MB</div>
<div class="t" style="left:-33.0px;width:600px;text-align:right;top:35.6px;font-size:11.7px;color:#000;">0 MB/s</div>
<div class="t" style="left:39.8px;width:600px;text-align:right;top:35.6px;font-size:11.7px;color:#000;">0 Mbps</div>
<div class="t" style="left:650.0px;top:35.6px;font-size:11.7px;color:#000;">Ve</div>
<div class="abs" style="left:354.5px;top:56.0px;width:72.8px;height:28.0px;background:#f9eca8"></div>
<div class="abs" style="left:427.3px;top:56.0px;width:73.2px;height:28.0px;background:#f9eca8"></div>
<div class="abs" style="left:500.5px;top:56.0px;width:73.0px;height:28.0px;background:#fff4c4"></div>
<div class="abs" style="left:573.5px;top:56.0px;width:72.9px;height:28.0px;background:#fff4c4"></div>
<div class="abs" style="left:646.4px;top:56.0px;width:14.5px;height:28.0px;background:#fff4c4"></div>
<div class="abs" style="left:427.3px;top:56.0px;width:1.0px;height:28.0px;background:#f0dca0"></div>
<div class="abs" style="left:500.5px;top:56.0px;width:1.0px;height:28.0px;background:#f0dca0"></div>
<div class="abs" style="left:573.5px;top:56.0px;width:1.0px;height:28.0px;background:#f0dca0"></div>
<div class="abs" style="left:646.4px;top:56.0px;width:1.0px;height:28.0px;background:#f0dca0"></div>
<svg style="left:29px;top:61px;" width="16" height="16" viewBox="0 0 16 16"><path d="M0 1H6L7.5 3H16V15H0Z" fill="#f0b828"/><path d="M0 4H16V15H0Z" fill="#ffd24a"/><rect x="4" y="10" width="8" height="5" rx="1" fill="#1a78d8"/></svg>
<div class="t" style="left:51.0px;top:63.6px;font-size:11.7px;color:#000;">Windows Explorer</div>
<div class="t" style="left:-179.2px;width:600px;text-align:right;top:63.6px;font-size:11.7px;color:#000;">0.4%</div>
<div class="t" style="left:-106.0px;width:600px;text-align:right;top:63.6px;font-size:11.7px;color:#000;">105.9 MB</div>
<div class="t" style="left:-33.0px;width:600px;text-align:right;top:63.6px;font-size:11.7px;color:#000;">0 MB/s</div>
<div class="t" style="left:39.8px;width:600px;text-align:right;top:63.6px;font-size:11.7px;color:#000;">0 Mbps</div>
<div class="t" style="left:650.0px;top:63.6px;font-size:11.7px;color:#000;">Ve</div>
<div class="abs" style="left:354.5px;top:84.0px;width:72.8px;height:28.0px;background:#fff4c4"></div>
<div class="abs" style="left:427.3px;top:84.0px;width:73.2px;height:28.0px;background:#f9eca8"></div>
<div class="abs" style="left:500.5px;top:84.0px;width:73.0px;height:28.0px;background:#f9eca8"></div>
<div class="abs" style="left:573.5px;top:84.0px;width:72.9px;height:28.0px;background:#fff4c4"></div>
<div class="abs" style="left:646.4px;top:84.0px;width:14.5px;height:28.0px;background:#fff4c4"></div>
<div class="abs" style="left:427.3px;top:84.0px;width:1.0px;height:28.0px;background:#f0dca0"></div>
<div class="abs" style="left:500.5px;top:84.0px;width:1.0px;height:28.0px;background:#f0dca0"></div>
<div class="abs" style="left:573.5px;top:84.0px;width:1.0px;height:28.0px;background:#f0dca0"></div>
<div class="abs" style="left:646.4px;top:84.0px;width:1.0px;height:28.0px;background:#f0dca0"></div>
<svg style="left:9px;top:92px;" width="7" height="11" viewBox="0 0 7 11"><path d="M1 1L5.5 5.5L1 10" fill="none" stroke="#555" stroke-width="1.2"/></svg>
<svg style="left:29px;top:89px;" width="16" height="16" viewBox="0 0 16 16"><rect x="0" y="3" width="10" height="11" rx="1.5" fill="#4b53bc"/><circle cx="12" cy="4" r="3" fill="#7b83eb"/><rect x="9" y="7" width="7" height="7" rx="2" fill="#7b83eb"/><path d="M2.5 6H7.5M5 6V12" stroke="#fff" stroke-width="1.5"/></svg>
<div class="t" style="left:51.0px;top:91.7px;font-size:11.7px;color:#000;">Microsoft Teams (5)</div>
<div class="t" style="left:-179.2px;width:600px;text-align:right;top:91.7px;font-size:11.7px;color:#000;">0%</div>
<div class="t" style="left:-106.0px;width:600px;text-align:right;top:91.7px;font-size:11.7px;color:#000;">105.2 MB</div>
<div class="t" style="left:-33.0px;width:600px;text-align:right;top:91.7px;font-size:11.7px;color:#000;">0.1 MB/s</div>
<div class="t" style="left:39.8px;width:600px;text-align:right;top:91.7px;font-size:11.7px;color:#000;">0 Mbps</div>
<div class="t" style="left:650.0px;top:91.7px;font-size:11.7px;color:#000;">Ve</div>
<div class="abs" style="left:354.5px;top:112.0px;width:72.8px;height:28.0px;background:#f9eca8"></div>
<div class="abs" style="left:427.3px;top:112.0px;width:73.2px;height:28.0px;background:#f9eca8"></div>
<div class="abs" style="left:500.5px;top:112.0px;width:73.0px;height:28.0px;background:#fff4c4"></div>
<div class="abs" style="left:573.5px;top:112.0px;width:72.9px;height:28.0px;background:#fff4c4"></div>
<div class="abs" style="left:646.4px;top:112.0px;width:14.5px;height:28.0px;background:#fff4c4"></div>
<div class="abs" style="left:427.3px;top:112.0px;width:1.0px;height:28.0px;background:#f0dca0"></div>
<div class="abs" style="left:500.5px;top:112.0px;width:1.0px;height:28.0px;background:#f0dca0"></div>
<div class="abs" style="left:573.5px;top:112.0px;width:1.0px;height:28.0px;background:#f0dca0"></div>
<div class="abs" style="left:646.4px;top:112.0px;width:1.0px;height:28.0px;background:#f0dca0"></div>
<svg style="left:9px;top:120px;" width="7" height="11" viewBox="0 0 7 11"><path d="M1 1L5.5 5.5L1 10" fill="none" stroke="#555" stroke-width="1.2"/></svg>
<svg style="left:29px;top:117px;" width="16" height="16" viewBox="0 0 16 16"><rect x="0.5" y="1.5" width="15" height="13" fill="#fff" stroke="#555"/><rect x="0.5" y="1.5" width="15" height="3" fill="#bbb"/><rect x="5" y="6" width="8" height="7" fill="#1a78d8"/><path d="M2 7H4M2 9H4M2 11H4" stroke="#888"/></svg>
<div class="t" style="left:51.0px;top:119.7px;font-size:11.7px;color:#000;">Antimalware Service Executable</div>
<div class="t" style="left:-179.2px;width:600px;text-align:right;top:119.7px;font-size:11.7px;color:#000;">0.5%</div>
<div class="t" style="left:-106.0px;width:600px;text-align:right;top:119.7px;font-size:11.7px;color:#000;">101.6 MB</div>
<div class="t" style="left:-33.0px;width:600px;text-align:right;top:119.7px;font-size:11.7px;color:#000;">0 MB/s</div>
<div class="t" style="left:39.8px;width:600px;text-align:right;top:119.7px;font-size:11.7px;color:#000;">0 Mbps</div>
<div class="t" style="left:650.0px;top:119.7px;font-size:11.7px;color:#000;">Ve</div>
<div class="abs" style="left:354.5px;top:140.0px;width:72.8px;height:28.0px;background:#f9eca8"></div>
<div class="abs" style="left:427.3px;top:140.0px;width:73.2px;height:28.0px;background:#f9eca8"></div>
<div class="abs" style="left:500.5px;top:140.0px;width:73.0px;height:28.0px;background:#fff4c4"></div>
<div class="abs" style="left:573.5px;top:140.0px;width:72.9px;height:28.0px;background:#fff4c4"></div>
<div class="abs" style="left:646.4px;top:140.0px;width:14.5px;height:28.0px;background:#fff4c4"></div>
<div class="abs" style="left:427.3px;top:140.0px;width:1.0px;height:28.0px;background:#f0dca0"></div>
<div class="abs" style="left:500.5px;top:140.0px;width:1.0px;height:28.0px;background:#f0dca0"></div>
<div class="abs" style="left:573.5px;top:140.0px;width:1.0px;height:28.0px;background:#f0dca0"></div>
<div class="abs" style="left:646.4px;top:140.0px;width:1.0px;height:28.0px;background:#f0dca0"></div>
<svg style="left:29px;top:145px;" width="16" height="16" viewBox="0 0 16 16"><rect x="0.5" y="1.5" width="15" height="13" fill="#fff" stroke="#555"/><rect x="0.5" y="1.5" width="15" height="3" fill="#bbb"/><rect x="5" y="6" width="8" height="7" fill="#1a78d8"/><path d="M2 7H4M2 9H4M2 11H4" stroke="#888"/></svg>
<div class="t" style="left:51.0px;top:147.7px;font-size:11.7px;color:#000;">Desktop Window Manager</div>
<div class="t" style="left:-179.2px;width:600px;text-align:right;top:147.7px;font-size:11.7px;color:#000;">0.9%</div>
<div class="t" style="left:-106.0px;width:600px;text-align:right;top:147.7px;font-size:11.7px;color:#000;">74.6 MB</div>
<div class="t" style="left:-33.0px;width:600px;text-align:right;top:147.7px;font-size:11.7px;color:#000;">0 MB/s</div>
<div class="t" style="left:39.8px;width:600px;text-align:right;top:147.7px;font-size:11.7px;color:#000;">0 Mbps</div>
<div class="t" style="left:650.0px;top:147.7px;font-size:11.7px;color:#000;">Ve</div>
<div class="abs" style="left:354.5px;top:168.0px;width:72.8px;height:28.0px;background:#fff4c4"></div>
<div class="abs" style="left:427.3px;top:168.0px;width:73.2px;height:28.0px;background:#f9eca8"></div>
<div class="abs" style="left:500.5px;top:168.0px;width:73.0px;height:28.0px;background:#fff4c4"></div>
<div class="abs" style="left:573.5px;top:168.0px;width:72.9px;height:28.0px;background:#fff4c4"></div>
<div class="abs" style="left:646.4px;top:168.0px;width:14.5px;height:28.0px;background:#fff4c4"></div>
<div class="abs" style="left:427.3px;top:168.0px;width:1.0px;height:28.0px;background:#f0dca0"></div>
<div class="abs" style="left:500.5px;top:168.0px;width:1.0px;height:28.0px;background:#f0dca0"></div>
<div class="abs" style="left:573.5px;top:168.0px;width:1.0px;height:28.0px;background:#f0dca0"></div>
<div class="abs" style="left:646.4px;top:168.0px;width:1.0px;height:28.0px;background:#f0dca0"></div>
<svg style="left:29px;top:173px;" width="16" height="16" viewBox="0 0 16 16"><rect x="0.5" y="1.5" width="15" height="13" fill="#fff" stroke="#555"/><rect x="0.5" y="1.5" width="15" height="3" fill="#bbb"/><rect x="5" y="6" width="8" height="7" fill="#1a78d8"/><path d="M2 7H4M2 9H4M2 11H4" stroke="#888"/></svg>
<div class="t" style="left:51.0px;top:175.7px;font-size:11.7px;color:#000;">Antimalware Service Executable...</div>
<div class="t" style="left:-179.2px;width:600px;text-align:right;top:175.7px;font-size:11.7px;color:#000;">0%</div>
<div class="t" style="left:-106.0px;width:600px;text-align:right;top:175.7px;font-size:11.7px;color:#000;">55.3 MB</div>
<div class="t" style="left:-33.0px;width:600px;text-align:right;top:175.7px;font-size:11.7px;color:#000;">0 MB/s</div>
<div class="t" style="left:39.8px;width:600px;text-align:right;top:175.7px;font-size:11.7px;color:#000;">0 Mbps</div>
<div class="t" style="left:650.0px;top:175.7px;font-size:11.7px;color:#000;">Ve</div>
<div class="abs" style="left:354.5px;top:196.0px;width:72.8px;height:28.0px;background:#f9eca8"></div>
<div class="abs" style="left:427.3px;top:196.0px;width:73.2px;height:28.0px;background:#f9eca8"></div>
<div class="abs" style="left:500.5px;top:196.0px;width:73.0px;height:28.0px;background:#fff4c4"></div>
<div class="abs" style="left:573.5px;top:196.0px;width:72.9px;height:28.0px;background:#fff4c4"></div>
<div class="abs" style="left:646.4px;top:196.0px;width:14.5px;height:28.0px;background:#fff4c4"></div>
<div class="abs" style="left:427.3px;top:196.0px;width:1.0px;height:28.0px;background:#f0dca0"></div>
<div class="abs" style="left:500.5px;top:196.0px;width:1.0px;height:28.0px;background:#f0dca0"></div>
<div class="abs" style="left:573.5px;top:196.0px;width:1.0px;height:28.0px;background:#f0dca0"></div>
<div class="abs" style="left:646.4px;top:196.0px;width:1.0px;height:28.0px;background:#f0dca0"></div>
<svg style="left:29px;top:201px;" width="16" height="16" viewBox="0 0 16 16"><circle cx="8" cy="8" r="8" fill="#5865f2"/><path d="M3.5 5 Q8 3 12.5 5 Q14 9 12.5 11 Q11 12 10 11 L10.5 10.3 Q8 11 5.5 10.3 L6 11 Q5 12 3.5 11 Q2 9 3.5 5Z" fill="#fff"/><circle cx="6.2" cy="8" r="1" fill="#5865f2"/><circle cx="9.8" cy="8" r="1" fill="#5865f2"/></svg>
<div class="t" style="left:51.0px;top:203.7px;font-size:11.7px;color:#000;">Discord (32 bit)</div>
<div class="t" style="left:-179.2px;width:600px;text-align:right;top:203.7px;font-size:11.7px;color:#000;">0.3%</div>
<div class="t" style="left:-106.0px;width:600px;text-align:right;top:203.7px;font-size:11.7px;color:#000;">50.6 MB</div>
<div class="t" style="left:-33.0px;width:600px;text-align:right;top:203.7px;font-size:11.7px;color:#000;">0 MB/s</div>
<div class="t" style="left:39.8px;width:600px;text-align:right;top:203.7px;font-size:11.7px;color:#000;">0 Mbps</div>
<div class="t" style="left:650.0px;top:203.7px;font-size:11.7px;color:#000;">Ve</div>
<div class="abs" style="left:354.5px;top:224.0px;width:72.8px;height:28.0px;background:#fff4c4"></div>
<div class="abs" style="left:427.3px;top:224.0px;width:73.2px;height:28.0px;background:#f9eca8"></div>
<div class="abs" style="left:500.5px;top:224.0px;width:73.0px;height:28.0px;background:#fff4c4"></div>
<div class="abs" style="left:573.5px;top:224.0px;width:72.9px;height:28.0px;background:#fff4c4"></div>
<div class="abs" style="left:646.4px;top:224.0px;width:14.5px;height:28.0px;background:#fff4c4"></div>
<div class="abs" style="left:427.3px;top:224.0px;width:1.0px;height:28.0px;background:#f0dca0"></div>
<div class="abs" style="left:500.5px;top:224.0px;width:1.0px;height:28.0px;background:#f0dca0"></div>
<div class="abs" style="left:573.5px;top:224.0px;width:1.0px;height:28.0px;background:#f0dca0"></div>
<div class="abs" style="left:646.4px;top:224.0px;width:1.0px;height:28.0px;background:#f0dca0"></div>
<svg style="left:29px;top:229px;" width="16" height="16" viewBox="0 0 16 16"><rect x="0.5" y="1.5" width="15" height="13" fill="#fff" stroke="#555"/><rect x="0.5" y="1.5" width="15" height="3" fill="#bbb"/><rect x="5" y="6" width="8" height="7" fill="#1a78d8"/><path d="M2 7H4M2 9H4M2 11H4" stroke="#888"/></svg>
<div class="t" style="left:51.0px;top:231.7px;font-size:11.7px;color:#000;">Secure System</div>
<div class="t" style="left:-179.2px;width:600px;text-align:right;top:231.7px;font-size:11.7px;color:#000;">0%</div>
<div class="t" style="left:-106.0px;width:600px;text-align:right;top:231.7px;font-size:11.7px;color:#000;">39.4 MB</div>
<div class="t" style="left:-33.0px;width:600px;text-align:right;top:231.7px;font-size:11.7px;color:#000;">0 MB/s</div>
<div class="t" style="left:39.8px;width:600px;text-align:right;top:231.7px;font-size:11.7px;color:#000;">0 Mbps</div>
<div class="t" style="left:650.0px;top:231.7px;font-size:11.7px;color:#000;">Ve</div>
<div class="abs" style="left:354.5px;top:252.0px;width:72.8px;height:28.0px;background:#fff4c4"></div>
<div class="abs" style="left:427.3px;top:252.0px;width:73.2px;height:28.0px;background:#f9eca8"></div>
<div class="abs" style="left:500.5px;top:252.0px;width:73.0px;height:28.0px;background:#fff4c4"></div>
<div class="abs" style="left:573.5px;top:252.0px;width:72.9px;height:28.0px;background:#fff4c4"></div>
<div class="abs" style="left:646.4px;top:252.0px;width:14.5px;height:28.0px;background:#fff4c4"></div>
<div class="abs" style="left:427.3px;top:252.0px;width:1.0px;height:28.0px;background:#f0dca0"></div>
<div class="abs" style="left:500.5px;top:252.0px;width:1.0px;height:28.0px;background:#f0dca0"></div>
<div class="abs" style="left:573.5px;top:252.0px;width:1.0px;height:28.0px;background:#f0dca0"></div>
<div class="abs" style="left:646.4px;top:252.0px;width:1.0px;height:28.0px;background:#f0dca0"></div>
<svg style="left:9px;top:260px;" width="7" height="11" viewBox="0 0 7 11"><path d="M1 1L5.5 5.5L1 10" fill="none" stroke="#555" stroke-width="1.2"/></svg>
<svg style="left:29px;top:257px;" width="16" height="16" viewBox="0 0 16 16"><rect x="0.5" y="0.5" width="15" height="15" fill="#e4eef8" stroke="#8ab"/><circle cx="8" cy="8" r="4" fill="none" stroke="#5a8ac8" stroke-width="2" stroke-dasharray="2 1"/></svg>
<div class="t" style="left:51.0px;top:259.6px;font-size:11.7px;color:#000;">Service Host: Diagnostic Policy ...</div>
<div class="t" style="left:-179.2px;width:600px;text-align:right;top:259.6px;font-size:11.7px;color:#000;">0%</div>
<div class="t" style="left:-106.0px;width:600px;text-align:right;top:259.6px;font-size:11.7px;color:#000;">33.1 MB</div>
<div class="t" style="left:-33.0px;width:600px;text-align:right;top:259.6px;font-size:11.7px;color:#000;">0 MB/s</div>
<div class="t" style="left:39.8px;width:600px;text-align:right;top:259.6px;font-size:11.7px;color:#000;">0 Mbps</div>
<div class="t" style="left:650.0px;top:259.6px;font-size:11.7px;color:#000;">Ve</div>
</div>
<div class="abs" style="left:2435.4px;top:678.0px;width:16.6px;height:270.0px;background:#f4f4f4"></div>
<div class="abs" style="left:2441.0px;top:696.0px;width:2.0px;height:18.0px;background:#8a8a8a;border-radius:1px"></div>
<div class="abs" style="left:1774.0px;top:948.0px;width:661.0px;height:16.5px;background:#f0f0f0"></div>
<div class="abs" style="left:1792.0px;top:956.0px;width:488.0px;height:2.0px;background:#8a8a8a;border-radius:1px"></div>
<div class="abs" style="left:1774.0px;top:964.5px;width:678.0px;height:1.0px;background:#dadada"></div>
<svg style="left:1786px;top:986px;" width="11" height="7" viewBox="0 0 11 7"><path d="M0.8 6L5.5 1.2L10.2 6" fill="none" stroke="#444" stroke-width="1.1"/></svg>
<div class="t" style="left:1808.0px;top:984.1px;font-size:11.7px;color:#000;">Fewer details</div>
<div class="btnd" style="left:2360.5px;top:980px;width:81.8px;height:20.2px;background:#fbfbfb"></div>
<div class="t" style="left:2101.4px;width:600px;text-align:center;top:984.1px;font-size:11.7px;color:#8a8a8a;">End task</div>
<div class="abs" style="left:800.4px;top:537.8px;width:254.2px;height:257.2px;background:#2b2b2b;border:1px solid #404040;border-radius:8px;box-shadow:0 4px 16px rgba(0,0,0,.45)"></div>
<div class="t" style="left:835.4px;top:548.0px;font-size:11.8px;color:#ffffff;">View</div>
<div class="t" style="left:835.4px;top:570.0px;font-size:11.8px;color:#ffffff;">Sort by</div>
<div class="t" style="left:835.4px;top:592.1px;font-size:11.8px;color:#ffffff;">Refresh</div>
<div class="t" style="left:835.4px;top:621.3px;font-size:11.8px;color:#8a8a8a;">Paste</div>
<div class="t" style="left:835.4px;top:642.8px;font-size:11.8px;color:#ffffff;">Undo Delete</div>
<div class="t" style="left:835.4px;top:664.9px;font-size:11.8px;color:#ffffff;">Open in Windows Terminal</div>
<div class="t" style="left:835.4px;top:693.9px;font-size:11.8px;color:#ffffff;">NVIDIA Control Panel</div>
<div class="t" style="left:835.4px;top:722.7px;font-size:11.8px;color:#ffffff;">New</div>
<div class="t" style="left:835.4px;top:752.3px;font-size:11.8px;color:#ffffff;">Display settings</div>
<div class="t" style="left:835.4px;top:773.8px;font-size:11.8px;color:#ffffff;">Personalize</div>
<div class="t" style="left:435.0px;width:600px;text-align:right;top:642.8px;font-size:11.8px;color:#ffffff;">Ctrl+Z</div>
<svg style="left:1036px;top:548px;" width="6" height="10" viewBox="0 0 6 10"><path d="M0.8 0.8L5 5L0.8 9.2" fill="none" stroke="#cfcfcf" stroke-width="1.1"/></svg>
<svg style="left:1036px;top:570px;" width="6" height="10" viewBox="0 0 6 10"><path d="M0.8 0.8L5 5L0.8 9.2" fill="none" stroke="#cfcfcf" stroke-width="1.1"/></svg>
<svg style="left:1036px;top:723px;" width="6" height="10" viewBox="0 0 6 10"><path d="M0.8 0.8L5 5L0.8 9.2" fill="none" stroke="#cfcfcf" stroke-width="1.1"/></svg>
<div class="abs" style="left:803.0px;top:612.4px;width:249.0px;height:1.0px;background:#404040"></div>
<div class="abs" style="left:803.0px;top:685.6px;width:249.0px;height:1.0px;background:#404040"></div>
<div class="abs" style="left:803.0px;top:714.6px;width:249.0px;height:1.0px;background:#404040"></div>
<div class="abs" style="left:803.0px;top:743.4px;width:249.0px;height:1.0px;background:#404040"></div>
<svg style="left:811px;top:665px;" width="16" height="11" viewBox="0 0 16 11"><rect x="0" y="0" width="16" height="11" fill="#3a3a3a"/><rect x="0" y="0" width="16" height="2" fill="#6a6a6a"/><path d="M3 4L6 6L3 8" fill="none" stroke="#fff" stroke-width="1.2"/><path d="M7 9H11" stroke="#fff" stroke-width="1.2"/></svg>
<svg style="left:811px;top:692px;" width="16" height="16" viewBox="0 0 16 16"><rect x="0" y="0" width="16" height="16" fill="#1a1a1a"/><path d="M3 8Q8 3 13 8Q8 13 3 8Z" fill="none" stroke="#76b900" stroke-width="1.5"/><circle cx="8" cy="8" r="2" fill="#76b900"/></svg>
<svg style="left:811px;top:751px;" width="16" height="14" viewBox="0 0 16 14"><rect x="0" y="0" width="16" height="10" fill="#5ac8f0"/><rect x="0" y="0" width="16" height="3" fill="#3aa0e0"/><rect x="6" y="10" width="4" height="2" fill="#aaa"/><rect x="4" y="12" width="8" height="1.5" fill="#aaa"/></svg>
<svg style="left:811px;top:772px;" width="16" height="15" viewBox="0 0 16 15"><rect x="0" y="2" width="16" height="10" fill="#5a7ae8"/><rect x="0" y="7" width="16" height="5" fill="#8a3ae8"/><path d="M6 11L14 2" stroke="#fff" stroke-width="2"/><rect x="6" y="12" width="4" height="2" fill="#aaa"/></svg>
<div class="abs" style="left:0.0px;top:1040.0px;width:2560.0px;height:40.0px;background:linear-gradient(90deg,#1f1d37 0px,#1f1d37 900px,#262628 980px,#262628 1680px,#201f38 1780px,#1f1e3a 2560px)"></div>
<svg style="left:13px;top:1049px;" width="21" height="21" viewBox="0 0 21 21"><defs><linearGradient id="wg" x1="0" y1="0" x2="1" y2="1"><stop offset="0" stop-color="#6ac8f8"/><stop offset="1" stop-color="#2a78d8"/></linearGradient></defs><rect x="0" y="0" width="10" height="10" rx="1" fill="url(#wg)"/><rect x="11" y="0" width="10" height="10" rx="1" fill="url(#wg)"/><rect x="0" y="11" width="10" height="10" rx="1" fill="url(#wg)"/><rect x="11" y="11" width="10" height="10" rx="1" fill="url(#wg)"/></svg>
<svg style="left:60px;top:1047px;" width="24" height="25" viewBox="0 0 24 25"><circle cx="14" cy="10" r="8.5" fill="#4a4a60" stroke="#eee" stroke-width="2.5"/><path d="M8 16L2 23" stroke="#eee" stroke-width="3" stroke-linecap="round"/></svg>
<svg style="left:108px;top:1048px;" width="25" height="24" viewBox="0 0 25 24"><rect x="0" y="6" width="18" height="16" rx="1.5" fill="#6a6a6a"/><rect x="6" y="0" width="18" height="16" rx="1.5" fill="#f0f0f0"/><rect x="6" y="6" width="12" height="10" fill="#c8c8c8"/></svg>
<svg style="left:875px;top:1048px;" width="24" height="24" viewBox="0 0 24 24"><circle cx="12" cy="12" r="12" fill="#1ea8f0"/><circle cx="12" cy="12" r="9.5" fill="none" stroke="#fff" stroke-width="1.5"/><path d="M7 20 Q9 12 13 9 L16 5 L16 12 Q14 15 14 20Z" fill="#fff"/></svg>
<svg style="left:924px;top:1048px;" width="24" height="24" viewBox="0 0 24 24"><circle cx="12" cy="12" r="12" fill="#5865f2"/><path d="M5 7 Q12 4 19 7 Q21 13 19 16 Q17 18 15.5 16.5 L16 15.5 Q12 17 8 15.5 L8.5 16.5 Q7 18 5 16 Q3 13 5 7Z" fill="#fff"/><circle cx="9.3" cy="11.5" r="1.5" fill="#5865f2"/><circle cx="14.7" cy="11.5" r="1.5" fill="#5865f2"/></svg>
<svg style="left:973px;top:1048px;" width="24" height="24" viewBox="0 0 24 24"><path d="M0 2H9L11 4H24V22H0Z" fill="#e8a818"/><path d="M0 5H24V22H0Z" fill="#ffcc40"/><rect x="4" y="15" width="16" height="7" rx="1.5" fill="#1a78d8"/><path d="M7 18H17" stroke="#0a4a98" stroke-width="1"/></svg>
<svg style="left:1022px;top:1048px;" width="24" height="24" viewBox="0 0 24 24"><circle cx="12" cy="12" r="12" fill="#1ed760"/><path d="M5 8Q12 5.5 19.5 9M6 12Q12 10 18 13M7 15.5Q12 14 17 16.5" fill="none" stroke="#111" stroke-width="2" stroke-linecap="round"/></svg>
<svg style="left:1071px;top:1048px;" width="24" height="24" viewBox="0 0 24 24"><rect x="0" y="2" width="24" height="20" rx="2" fill="#3a3a3a"/><rect x="0" y="2" width="24" height="4" rx="2" fill="#6a6a6a"/><path d="M4 9L8 12L4 15" fill="none" stroke="#fff" stroke-width="1.5"/><path d="M9 16H14" stroke="#fff" stroke-width="1.5"/></svg>
<svg style="left:1120px;top:1048px;" width="24" height="24" viewBox="0 0 24 24"><rect x="6" y="1" width="18" height="22" rx="2" fill="#2b7cd3"/><rect x="6" y="8" width="18" height="7" fill="#185abd"/><rect x="6" y="15" width="18" height="8" fill="#103f91"/><rect x="0" y="5" width="14" height="14" rx="1.5" fill="#185abd"/><text x="7" y="16" font-size="11" font-weight="bold" text-anchor="middle" fill="#fff" font-family="Liberation Sans">W</text></svg>
<svg style="left:1168px;top:1048px;" width="24" height="24" viewBox="0 0 24 24"><rect x="6" y="1" width="18" height="22" rx="2" fill="#ca64ea"/><rect x="14" y="1" width="10" height="22" fill="#7719aa"/><rect x="0" y="5" width="14" height="14" rx="1.5" fill="#7719aa"/><text x="7" y="16" font-size="11" font-weight="bold" text-anchor="middle" fill="#fff" font-family="Liberation Sans">N</text></svg>
<svg style="left:1218px;top:1048px;" width="24" height="24" viewBox="0 0 24 24"><circle cx="19" cy="5" r="3.5" fill="#7b83eb"/><rect x="14" y="9" width="10" height="11" rx="3" fill="#7b83eb"/><circle cx="12" cy="4.5" r="4" fill="#5059c9"/><rect x="6" y="8" width="12" height="14" rx="3" fill="#5059c9"/><rect x="0" y="6" width="13" height="13" rx="1.5" fill="#4b53bc"/><path d="M3 9.5H10M6.5 9.5V17" stroke="#fff" stroke-width="2"/></svg>
<svg style="left:1267px;top:1048px;" width="24" height="24" viewBox="0 0 24 24"><rect x="6" y="0" width="12" height="24" rx="2" fill="#1ea0e8"/><rect x="6" y="20" width="12" height="4" rx="1" fill="#0a70c0"/></svg>
<svg style="left:1316px;top:1048px;" width="24" height="24" viewBox="0 0 24 24"><path d="M2 10 Q5 2 14 3 Q22 4 22 11 L18 12 L6 13Z" fill="#f2dc20" stroke="#333" stroke-width="1.2"/><path d="M6 12Q12 8 17 12L20 19L9 21Z" fill="#fff" stroke="#333"/><path d="M18 20L22 24" stroke="#e02040" stroke-width="2.5"/></svg>
<svg style="left:1364px;top:1048px;" width="24" height="24" viewBox="0 0 24 24"><rect x="0" y="2" width="24" height="20" rx="1" fill="#5ab8f0" stroke="#2a80c8"/><circle cx="8" cy="11" r="5" fill="#f0a030"/><path d="M8 11V6A5 5 0 0 1 13 11Z" fill="#fff"/><path d="M15 8H21M15 12H21M15 16H21" stroke="#fff" stroke-width="1.2"/></svg>
<svg style="left:1413px;top:1048px;" width="24" height="24" viewBox="0 0 24 24"><ellipse cx="14" cy="12" rx="8" ry="11" fill="#9aa0a8"/><ellipse cx="11" cy="12" rx="6" ry="10" fill="#d8dce0"/><ellipse cx="9" cy="11" rx="3" ry="6" fill="#f4f6f8"/></svg>
<svg style="left:1463px;top:1048px;" width="24" height="24" viewBox="0 0 24 24"><rect x="0" y="2" width="24" height="20" fill="#e8f0fa" stroke="#6a8ab8"/><path d="M1 16L5 8L8 14L11 5L15 17L18 11L23 14" fill="none" stroke="#2a6ad0" stroke-width="1.5"/></svg>
<svg style="left:1511px;top:1048px;" width="24" height="24" viewBox="0 0 24 24"><rect x="2" y="0" width="20" height="24" fill="#fff" stroke="#8a9ab8"/><rect x="2" y="0" width="20" height="4" fill="#5a7ab0"/><text x="8" y="15" font-size="11" fill="#e06020" font-family="Liberation Serif" font-weight="bold">A</text><path d="M13 9H19M13 12H19M5 17H19M5 20H19" stroke="#4a80c8"/></svg>
<svg style="left:1560px;top:1048px;" width="24" height="24" viewBox="0 0 24 24"><rect x="1" y="1" width="22" height="16" fill="#1a5ab8" stroke="#777"/><path d="M3 13L9 6L13 11L19 4" stroke="#40d040" stroke-width="2.5" fill="none"/><path d="M14 4L21 2" stroke="#e04020" stroke-width="2"/><ellipse cx="12" cy="21" rx="8" ry="2.5" fill="#c0c0c0"/></svg>
<svg style="left:1609px;top:1048px;" width="24" height="24" viewBox="0 0 24 24"><rect x="3" y="3" width="18" height="20" fill="#c8c8c8" stroke="#555"/><rect x="3" y="0" width="18" height="5" fill="#8a8a8a"/><rect x="6" y="8" width="12" height="12" fill="#6a9a6a"/><circle cx="12" cy="14" r="4" fill="#ddd"/></svg>
<svg style="left:1658px;top:1048px;" width="24" height="24" viewBox="0 0 24 24"><rect x="10" y="2" width="12" height="14" fill="#d0d0d0" stroke="#666"/><rect x="13" y="5" width="4" height="4" fill="#3a3"/><rect x="2" y="12" width="12" height="10" fill="#b0b0b0" stroke="#555"/><rect x="4" y="16" width="3" height="3" fill="#444"/><rect x="9" y="16" width="3" height="3" fill="#444"/></svg>
<div class="abs" style="left:867.0px;top:1078.0px;width:40.0px;height:2.0px;background:#76cdf7;border-radius:1px"></div>
<div class="abs" style="left:964.7px;top:1078.0px;width:40.0px;height:2.0px;background:#76cdf7;border-radius:1px"></div>
<div class="abs" style="left:1307.5px;top:1078.0px;width:40.0px;height:2.0px;background:#76cdf7;border-radius:1px"></div>
<div class="abs" style="left:1356.3px;top:1078.0px;width:40.0px;height:2.0px;background:#76cdf7;border-radius:1px"></div>
<div class="abs" style="left:1405.0px;top:1078.0px;width:40.0px;height:2.0px;background:#76cdf7;border-radius:1px"></div>
<div class="abs" style="left:1454.6px;top:1078.0px;width:40.0px;height:2.0px;background:#76cdf7;border-radius:1px"></div>
<div class="abs" style="left:1503.4px;top:1078.0px;width:40.0px;height:2.0px;background:#76cdf7;border-radius:1px"></div>
<div class="abs" style="left:1551.5px;top:1078.0px;width:40.0px;height:2.0px;background:#76cdf7;border-radius:1px"></div>
<div class="abs" style="left:1601.0px;top:1078.0px;width:40.0px;height:2.0px;background:#76cdf7;border-radius:1px"></div>
<div class="abs" style="left:1650.5px;top:1078.0px;width:40.0px;height:2.0px;background:#76cdf7;border-radius:1px"></div>
<svg style="left:2324px;top:1057px;" width="10" height="6" viewBox="0 0 10 6"><path d="M0.8 5.2L5 1L9.2 5.2" fill="none" stroke="#fff" stroke-width="1.1"/></svg>
<svg style="left:2345px;top:1052px;" width="17" height="14" viewBox="0 0 17 14"><path d="M2 0V3M5 0V3M0.5 3H6.5V6Q6.5 8 3.5 8Q0.5 8 0.5 6Z" fill="none" stroke="#fff" stroke-width="1"/><path d="M3.5 8V14" stroke="#fff"/><rect x="6.5" y="4" width="9" height="8" rx="1.5" fill="none" stroke="#fff"/><rect x="15.5" y="6.5" width="1.5" height="3" fill="#fff"/><rect x="7.5" y="5" width="7" height="6" fill="#fff"/></svg>
<svg style="left:2369px;top:1051px;" width="16" height="16" viewBox="0 0 16 16"><rect x="0.5" y="1.5" width="11" height="9" fill="none" stroke="#fff"/><path d="M3 13.5H10M6 10.5V13.5" stroke="#fff"/><rect x="12" y="0.5" width="3" height="5" rx="1" fill="none" stroke="#fff"/><path d="M13.5 5.5V15" stroke="#fff"/></svg>
<svg style="left:2392px;top:1052px;" width="17" height="14" viewBox="0 0 17 14"><path d="M1 5H4L8 1.5V12.5L4 9H1Z" fill="none" stroke="#fff" stroke-width="1.1"/><path d="M10.5 4.5Q12 7 10.5 9.5M12.5 2.5Q15 7 12.5 11.5M14.5 1Q17.5 7 14.5 13" fill="none" stroke="#fff" stroke-width="1.1"/></svg>
<div class="t" style="left:2419.5px;top:1054.0px;font-size:11px;color:#fff;">ENG</div>
<div class="t" style="left:2184.5px;width:600px;text-align:center;top:1044.8px;font-size:11.3px;color:#fff;">7:04 PM</div>
<div class="t" style="left:2184.5px;width:600px;text-align:center;top:1062.8px;font-size:11.3px;color:#fff;">6/10/2021</div>
<svg style="left:2529px;top:1052px;" width="15" height="15" viewBox="0 0 15 15"><path d="M1.5 0.5H13.5Q14.5 0.5 14.5 1.5V9.5Q14.5 10.5 13.5 10.5H5L2 13.5V10.5H1.5Q0.5 10.5 0.5 9.5V1.5Q0.5 0.5 1.5 0.5Z" fill="#fff"/><path d="M3 3.5H12M3 6H12M3 8.5H8" stroke="#1f1e3a" stroke-width="1"/><circle cx="12" cy="12" r="3" fill="#fff" stroke="#1f1e3a"/></svg>
</body></html>
